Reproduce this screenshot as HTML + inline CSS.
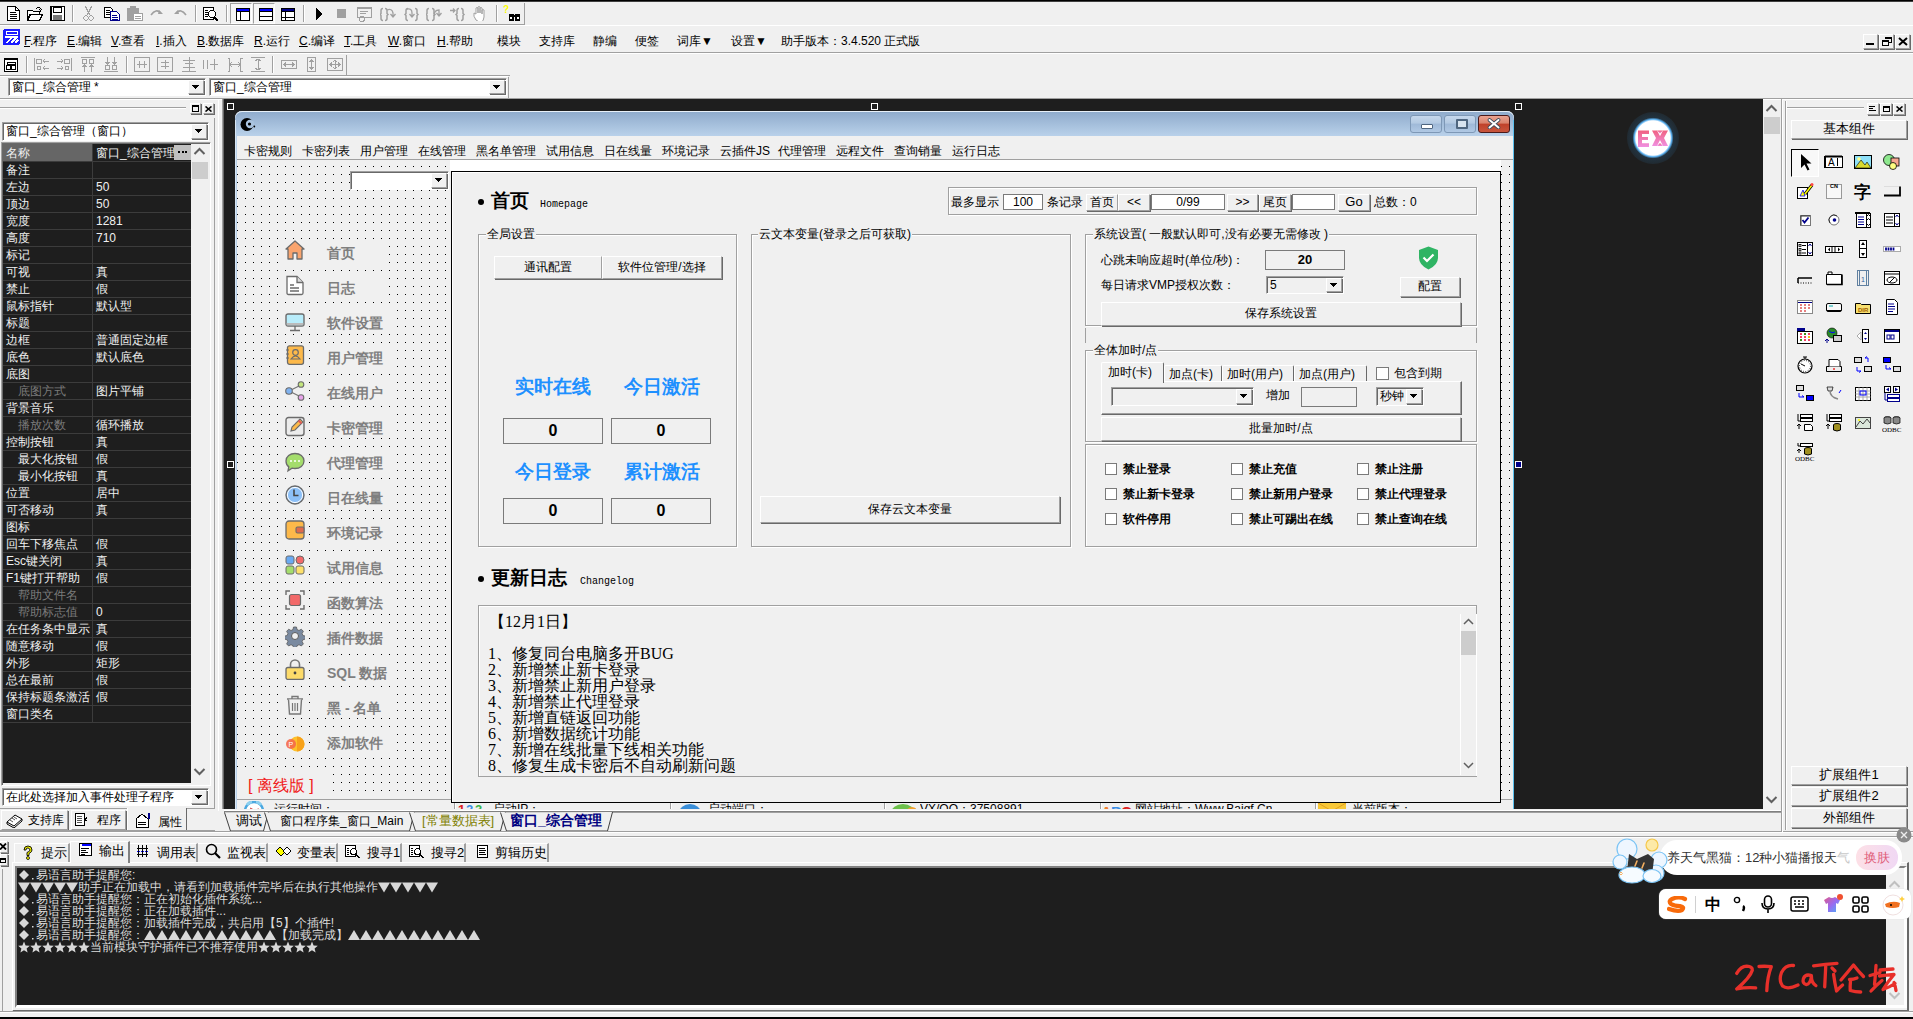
<!DOCTYPE html><html><head><meta charset="utf-8"><style>
*{margin:0;padding:0}
html,body{width:1913px;height:1019px;overflow:hidden;background:#f0f0f0}
body{position:relative;font-family:"Liberation Sans",sans-serif}
.a{position:absolute}
.t{font-family:"Liberation Sans",sans-serif;font-size:12px;line-height:14px;white-space:nowrap;color:#000}
</style></head><body><div class="a" style="left:0px;top:0px;width:1913px;height:1px;background:#000"></div>
<div class="a" style="left:0px;top:1px;width:1913px;height:1px;background:#404040"></div>
<svg class="a" style="left:7px;top:6px;" width="13" height="15" viewBox="0 0 13 15" shape-rendering="crispEdges"><path d="M0.5 0.5h8l4 4v10h-12z" fill="#fff" stroke="#000"/><path d="M8.5 0.5v4h4" fill="none" stroke="#000"/><path d="M3 6h6M3 8h7M3 10h7M3 12h7" stroke="#000"/></svg>
<svg class="a" style="left:27px;top:6px;" width="16" height="15" viewBox="0 0 16 15" shape-rendering="crispEdges"><path d="M0.5 4.5h5l1 1h6v3h-10l-2 5.5z" fill="#fff" stroke="#000"/><path d="M0.5 14.5l3-6h12l-3 6z" fill="#fff" stroke="#000"/><path d="M9 3q3-3 5 0h1l-1.5 2-1.5-2h1" fill="none" stroke="#000"/></svg>
<svg class="a" style="left:50px;top:6px;" width="15" height="15" viewBox="0 0 15 15" shape-rendering="crispEdges"><rect x="0.5" y="0.5" width="14" height="14" fill="#fff" stroke="#000"/><rect x="3" y="1" width="8" height="5" fill="#fff" stroke="#000"/><rect x="3" y="9" width="9" height="5" fill="#777"/><rect x="0" y="0" width="2" height="15" fill="#000"/></svg>
<div class="a" style="left:72px;top:5px;width:1px;height:17px;background:#a0a0a0"></div>
<div class="a" style="left:73px;top:5px;width:1px;height:17px;background:#fff"></div>
<svg class="a" style="left:83px;top:6px;" width="11" height="15" viewBox="0 0 11 15" shape-rendering="crispEdges"><path d="M2 0l5 9M9 0l-5 9" stroke="#a0a0a0" stroke-width="1.2" fill="none"/><circle cx="3" cy="12" r="2.3" fill="none" stroke="#a0a0a0"/><circle cx="8" cy="12" r="2.3" fill="none" stroke="#a0a0a0"/></svg>
<svg class="a" style="left:104px;top:7px;" width="16" height="14" viewBox="0 0 16 14" shape-rendering="crispEdges"><path d="M0.5 0.5h6l2 2v8h-8z" fill="#fff" stroke="#000"/><path d="M2 3h4M2 5h5M2 7h5" stroke="#000"/><path d="M6.5 4.5h6l3 3v6h-9z" fill="#fff" stroke="#00008b"/><path d="M8 8h5M8 10h6M8 12h6" stroke="#00008b"/></svg>
<svg class="a" style="left:127px;top:6px;" width="16" height="15" viewBox="0 0 16 15" shape-rendering="crispEdges"><rect x="0.5" y="2.5" width="11" height="12" rx="1" fill="#a0a0a0" stroke="#a0a0a0"/><rect x="3" y="0" width="6" height="3" fill="#a0a0a0"/><rect x="6.5" y="7.5" width="9" height="7" fill="#fff" stroke="#a0a0a0"/><path d="M8 10h6M8 12h6" stroke="#a0a0a0"/></svg>
<svg class="a" style="left:150px;top:9px;" width="14" height="9" viewBox="0 0 14 9"><path d="M1 6q5-7 10-2" fill="none" stroke="#a0a0a0" stroke-width="1.6"/><path d="M9 1l4 4h-5z" fill="#a0a0a0"/></svg>
<svg class="a" style="left:173px;top:9px;" width="14" height="9" viewBox="0 0 14 9"><path d="M13 6q-5-7-10-2" fill="none" stroke="#a0a0a0" stroke-width="1.6"/><path d="M5 1l-4 4h5z" fill="#a0a0a0"/></svg>
<div class="a" style="left:195px;top:5px;width:1px;height:17px;background:#a0a0a0"></div>
<div class="a" style="left:196px;top:5px;width:1px;height:17px;background:#fff"></div>
<svg class="a" style="left:203px;top:7px;" width="17" height="15" viewBox="0 0 17 15" shape-rendering="crispEdges"><rect x="0.5" y="0.5" width="10" height="12" fill="#fff" stroke="#000"/><path d="M2 3h3M2 5h3M2 7h3M2 9h3" stroke="#000"/><circle cx="9" cy="7" r="3.5" fill="#fff" stroke="#000"/><path d="M11 10l4 4" stroke="#000" stroke-width="2"/></svg>
<div class="a" style="left:226px;top:5px;width:1px;height:17px;background:#a0a0a0"></div>
<div class="a" style="left:227px;top:5px;width:1px;height:17px;background:#fff"></div>
<div class="a" style="left:230px;top:3px;width:22px;height:21px;border-top:1px solid #a0a0a0;border-left:1px solid #a0a0a0;border-right:1px solid #fff;border-bottom:1px solid #fff;box-sizing:border-box;background:#f5f5f5"></div>
<div class="a" style="left:253px;top:3px;width:22px;height:21px;border-top:1px solid #a0a0a0;border-left:1px solid #a0a0a0;border-right:1px solid #fff;border-bottom:1px solid #fff;box-sizing:border-box;background:#f5f5f5"></div>
<svg class="a" style="left:236px;top:8px;" width="14" height="13" viewBox="0 0 14 13" shape-rendering="crispEdges"><rect x="0.5" y="0.5" width="13" height="12" fill="#fff" stroke="#000"/><rect x="1" y="1" width="12" height="2" fill="#00f"/><path d="M1 3.5h12M4.5 4v8" stroke="#000"/></svg>
<svg class="a" style="left:259px;top:8px;" width="14" height="13" viewBox="0 0 14 13" shape-rendering="crispEdges"><rect x="0.5" y="0.5" width="13" height="12" fill="#fff" stroke="#000"/><rect x="1" y="1" width="12" height="2" fill="#00f"/><path d="M1 3.5h12M1 8.5h12" stroke="#000"/></svg>
<svg class="a" style="left:281px;top:8px;" width="14" height="13" viewBox="0 0 14 13" shape-rendering="crispEdges"><rect x="0.5" y="0.5" width="13" height="12" fill="#fff" stroke="#000"/><rect x="1" y="1" width="12" height="2" fill="#00008b"/><path d="M1 3.5h12M4.5 4v8M1 9.5h12" stroke="#000"/></svg>
<div class="a" style="left:303px;top:5px;width:1px;height:17px;background:#a0a0a0"></div>
<div class="a" style="left:304px;top:5px;width:1px;height:17px;background:#fff"></div>
<svg class="a" style="left:316px;top:8px;" width="7" height="12" viewBox="0 0 7 12" shape-rendering="crispEdges"><path d="M0 0l7 6l-7 6z" fill="#000"/></svg>
<svg class="a" style="left:337px;top:9px;" width="9" height="9" viewBox="0 0 9 9" shape-rendering="crispEdges"><rect width="9" height="9" fill="#a0a0a0"/></svg>
<svg class="a" style="left:357px;top:7px;" width="15" height="15" viewBox="0 0 15 15" shape-rendering="crispEdges"><rect x="0.5" y="0.5" width="14" height="10" fill="none" stroke="#a0a0a0"/><rect x="0" y="0" width="15" height="2" fill="#a0a0a0"/><path d="M3 4h8M3 6h6" stroke="#a0a0a0"/><circle cx="5" cy="12" r="2.5" fill="none" stroke="#a0a0a0"/></svg>
<svg class="a" style="left:380px;top:7px;" width="16" height="15" viewBox="0 0 16 15"><path d="M3 1.5q-2 0-2 2v3l-1 1 1 1v3q0 2 2 2" fill="none" stroke="#a0a0a0" stroke-width="1.5"/><path d="M5 1.5q2 0 2 2v3l1 1-1 1v3q0 2-2 2" fill="none" stroke="#a0a0a0" stroke-width="1.5"/><path d="M7 3q5-2 6 3v3M10.5 7l2.5 3 2.5-3" fill="none" stroke="#a0a0a0" stroke-width="1.3"/></svg>
<svg class="a" style="left:404px;top:7px;" width="16" height="15" viewBox="0 0 16 15"><path d="M4 1.5q-2 0-2 2v3l-1 1 1 1v3q0 2 2 2" fill="none" stroke="#a0a0a0" stroke-width="1.5"/><path d="M11 1.5q2 0 2 2v3l1 1-1 1v3q0 2-2 2" fill="none" stroke="#a0a0a0" stroke-width="1.5"/><path d="M3 2q5-1 5 4v3M5.5 7l2.5 3 2.5-3" fill="none" stroke="#a0a0a0" stroke-width="1.3"/></svg>
<svg class="a" style="left:426px;top:7px;" width="16" height="15" viewBox="0 0 16 15"><path d="M3 1.5q-2 0-2 2v3l-1 1 1 1v3q0 2 2 2" fill="none" stroke="#a0a0a0" stroke-width="1.5"/><path d="M6 1.5q2 0 2 2v3l1 1-1 1v3q0 2-2 2" fill="none" stroke="#a0a0a0" stroke-width="1.5"/><path d="M8 9q0-6 5-6v5M10.5 6l2.5 3 2.5-3" fill="none" stroke="#a0a0a0" stroke-width="1.3"/></svg>
<svg class="a" style="left:450px;top:7px;" width="16" height="15" viewBox="0 0 16 15"><path d="M9 1.5q-2 0-2 2v3l-1 1 1 1v3q0 2 2 2" fill="none" stroke="#a0a0a0" stroke-width="1.5"/><path d="M11 1.5q2 0 2 2v3l1 1-1 1v3q0 2-2 2" fill="none" stroke="#a0a0a0" stroke-width="1.5"/><path d="M0 3.5h5M3 1.5l2 2-2 2" fill="none" stroke="#a0a0a0" stroke-width="1.3"/></svg>
<svg class="a" style="left:473px;top:6px;" width="13" height="15" viewBox="0 0 13 15"><path d="M3 14q-3-4-2-7l2 1v-6q1-1 2 0v5v-6q1-1 2 0v6v-5q1-1 2 0v6v-4q1-1 2 0v7q0 3-3 6z" fill="#fff" stroke="#a0a0a0"/></svg>
<div class="a" style="left:496px;top:5px;width:1px;height:17px;background:#a0a0a0"></div>
<div class="a" style="left:497px;top:5px;width:1px;height:17px;background:#fff"></div>
<svg class="a" style="left:502px;top:4px;" width="19" height="18" viewBox="0 0 19 18"><text x="1" y="9" font-family="Liberation Sans" font-size="10" font-weight="bold" fill="#ff0">?</text><rect x="7" y="10" width="5" height="7" fill="#000"/><rect x="13" y="10" width="5" height="7" fill="#000"/><rect x="10" y="11" width="4" height="2" fill="#000"/><rect x="8" y="13" width="2" height="2" fill="#fff"/><rect x="15" y="13" width="2" height="2" fill="#fff"/></svg>
<div class="a" style="left:524px;top:3px;width:1px;height:21px;background:#a0a0a0"></div>
<div class="a" style="left:0px;top:24px;width:525px;height:1px;background:#a0a0a0"></div>
<div class="a" style="left:0px;top:25px;width:1913px;height:1px;background:#fff"></div>
<svg class="a" style="left:3px;top:29px;" width="17" height="16" viewBox="0 0 17 16" shape-rendering="crispEdges"><rect x="0" y="0" width="17" height="16" rx="2" fill="#1a1aff"/><rect x="3" y="2" width="11" height="3" fill="none" stroke="#fff"/><path d="M2 8h13M4 14l4-5M8 14l5-5M12 14l3-3" stroke="#fff" stroke-width="1.5"/></svg>
<div class="a t" style="left:24px;top:34px;"><u>F</u>.程序</div>
<div class="a t" style="left:67px;top:34px;"><u>E</u>.编辑</div>
<div class="a t" style="left:111px;top:34px;"><u>V</u>.查看</div>
<div class="a t" style="left:156px;top:34px;"><u>I</u>.插入</div>
<div class="a t" style="left:197px;top:34px;"><u>B</u>.数据库</div>
<div class="a t" style="left:254px;top:34px;"><u>R</u>.运行</div>
<div class="a t" style="left:299px;top:34px;"><u>C</u>.编译</div>
<div class="a t" style="left:344px;top:34px;"><u>T</u>.工具</div>
<div class="a t" style="left:388px;top:34px;"><u>W</u>.窗口</div>
<div class="a t" style="left:437px;top:34px;"><u>H</u>.帮助</div>
<div class="a t" style="left:497px;top:34px;">模块</div>
<div class="a t" style="left:539px;top:34px;">支持库</div>
<div class="a t" style="left:593px;top:34px;">静编</div>
<div class="a t" style="left:635px;top:34px;">便签</div>
<div class="a t" style="left:677px;top:34px;">词库▼</div>
<div class="a t" style="left:731px;top:34px;">设置▼</div>
<div class="a t" style="left:781px;top:34px;">助手版本：3.4.520 正式版</div>
<div class="a" style="left:1863px;top:34px;width:15px;height:15px;background:#f0f0f0;border-top:1px solid #fff;border-left:1px solid #fff;border-right:1px solid #a0a0a0;border-bottom:1px solid #a0a0a0;box-shadow:1px 1px 0 #696969;box-sizing:border-box;"></div>
<div class="a" style="left:1879px;top:34px;width:15px;height:15px;background:#f0f0f0;border-top:1px solid #fff;border-left:1px solid #fff;border-right:1px solid #a0a0a0;border-bottom:1px solid #a0a0a0;box-shadow:1px 1px 0 #696969;box-sizing:border-box;"></div>
<div class="a" style="left:1895px;top:34px;width:15px;height:15px;background:#f0f0f0;border-top:1px solid #fff;border-left:1px solid #fff;border-right:1px solid #a0a0a0;border-bottom:1px solid #a0a0a0;box-shadow:1px 1px 0 #696969;box-sizing:border-box;"></div>
<svg class="a" style="left:1866px;top:43px;" width="8" height="2" viewBox="0 0 8 2" shape-rendering="crispEdges"><rect width="8" height="2" fill="#000"/></svg>
<svg class="a" style="left:1882px;top:37px;" width="10" height="9" viewBox="0 0 10 9" shape-rendering="crispEdges"><path d="M3 0.5h6v5h-2M0.5 3.5h6v5h-6z" fill="none" stroke="#000"/><rect x="3" y="0" width="7" height="2" fill="#000"/><rect x="0" y="3" width="7" height="2" fill="#000"/></svg>
<svg class="a" style="left:1898px;top:37px;" width="10" height="9" viewBox="0 0 10 9"><path d="M1 1l8 7M9 1l-8 7" stroke="#000" stroke-width="2"/></svg>
<div class="a" style="left:0px;top:52px;width:1913px;height:1px;background:#a0a0a0"></div>
<div class="a" style="left:0px;top:53px;width:1913px;height:1px;background:#fff"></div>
<svg class="a" style="left:4px;top:58px;" width="14" height="14" viewBox="0 0 14 14" shape-rendering="crispEdges"><rect x="0.5" y="0.5" width="13" height="13" fill="#fff" stroke="#000"/><rect x="0" y="0" width="14" height="2" fill="#000"/><rect x="3" y="4" width="8" height="2" fill="none" stroke="#000"/><rect x="2.5" y="7.5" width="4" height="4" fill="none" stroke="#000"/><rect x="7.5" y="7.5" width="4" height="4" fill="none" stroke="#000"/></svg>
<div class="a" style="left:26px;top:56px;width:1px;height:17px;background:#a0a0a0"></div>
<div class="a" style="left:27px;top:56px;width:1px;height:17px;background:#fff"></div>
<svg class="a" style="left:34px;top:57px;" width="16" height="15" viewBox="0 0 16 15" shape-rendering="crispEdges"><path d="M0.5 1v13" stroke="#a0a0a0"/><rect x="2.5" y="2.5" width="5" height="4" fill="none" stroke="#a0a0a0"/><circle cx="5" cy="11" r="2" fill="none" stroke="#a0a0a0"/><path d="M9 4h6M9 11h6M11 2l-2 2 2 2M11 9l-2 2 2 2" fill="none" stroke="#a0a0a0"/></svg>
<svg class="a" style="left:57px;top:57px;" width="16" height="15" viewBox="0 0 16 15" shape-rendering="crispEdges"><path d="M14.5 1v13" stroke="#a0a0a0"/><rect x="7.5" y="2.5" width="5" height="4" fill="none" stroke="#a0a0a0"/><circle cx="10" cy="11" r="2" fill="none" stroke="#a0a0a0"/><path d="M0 4h6M0 11h6M4 2l2 2-2 2M4 9l2 2-2 2" fill="none" stroke="#a0a0a0"/></svg>
<svg class="a" style="left:80px;top:57px;" width="16" height="15" viewBox="0 0 16 15" shape-rendering="crispEdges"><path d="M1 0.5h14" stroke="#a0a0a0"/><rect x="2.5" y="2.5" width="4" height="4" fill="none" stroke="#a0a0a0"/><rect x="9.5" y="2.5" width="4" height="4" fill="none" stroke="#a0a0a0"/><path d="M4.5 8v7M11.5 8v7M2.5 10l2-2 2 2M9.5 10l2-2 2 2" fill="none" stroke="#a0a0a0"/></svg>
<svg class="a" style="left:103px;top:57px;" width="16" height="15" viewBox="0 0 16 15" shape-rendering="crispEdges"><path d="M1 14.5h14" stroke="#a0a0a0"/><rect x="2.5" y="8.5" width="4" height="4" fill="none" stroke="#a0a0a0"/><rect x="9.5" y="8.5" width="4" height="4" fill="none" stroke="#a0a0a0"/><path d="M4.5 0v7M11.5 0v7M2.5 5l2 2 2-2M9.5 5l2 2 2-2" fill="none" stroke="#a0a0a0"/></svg>
<div class="a" style="left:126px;top:56px;width:1px;height:17px;background:#a0a0a0"></div>
<div class="a" style="left:127px;top:56px;width:1px;height:17px;background:#fff"></div>
<svg class="a" style="left:134px;top:57px;" width="16" height="15" viewBox="0 0 16 15" shape-rendering="crispEdges"><rect x="0.5" y="0.5" width="15" height="14" fill="none" stroke="#a0a0a0"/><path d="M3 7.5h10M5.5 4v7M10.5 4v7" stroke="#a0a0a0"/></svg>
<svg class="a" style="left:157px;top:57px;" width="16" height="15" viewBox="0 0 16 15" shape-rendering="crispEdges"><rect x="0.5" y="0.5" width="15" height="14" fill="none" stroke="#a0a0a0"/><path d="M8 3v9M4 5.5h8M4 9.5h8" stroke="#a0a0a0"/></svg>
<svg class="a" style="left:181px;top:57px;" width="16" height="15" viewBox="0 0 16 15" shape-rendering="crispEdges"><path d="M8 0v15M2 3.5h12M4 6.5h8M2 10.5h12M1 14.5h14" stroke="#a0a0a0"/></svg>
<svg class="a" style="left:203px;top:57px;" width="16" height="15" viewBox="0 0 16 15" shape-rendering="crispEdges"><path d="M0.5 3v9M4.5 3v9M7 7.5h8M11 2v11" stroke="#a0a0a0"/></svg>
<svg class="a" style="left:227px;top:57px;" width="16" height="15" viewBox="0 0 16 15" shape-rendering="crispEdges"><path d="M0.5 1h2v13h-2M15.5 1h-2v13h2M4 7.5h8M5 5l-2 2.5 2 2.5M11 5l2 2.5-2 2.5" fill="none" stroke="#a0a0a0"/></svg>
<svg class="a" style="left:250px;top:57px;" width="16" height="15" viewBox="0 0 16 15" shape-rendering="crispEdges"><path d="M1 0.5h14M1 14.5h14M8 2v11M5 4l3-2 3 2M5 11l3 2 3-2" fill="none" stroke="#a0a0a0"/></svg>
<div class="a" style="left:272px;top:56px;width:1px;height:17px;background:#a0a0a0"></div>
<div class="a" style="left:273px;top:56px;width:1px;height:17px;background:#fff"></div>
<svg class="a" style="left:281px;top:57px;" width="16" height="15" viewBox="0 0 16 15" shape-rendering="crispEdges"><rect x="0.5" y="3.5" width="15" height="8" fill="none" stroke="#a0a0a0"/><path d="M3 7.5h10M5 5.5l-2 2 2 2M11 5.5l2 2-2 2" fill="none" stroke="#a0a0a0"/></svg>
<svg class="a" style="left:304px;top:57px;" width="16" height="15" viewBox="0 0 16 15" shape-rendering="crispEdges"><rect x="3.5" y="0.5" width="8" height="14" fill="none" stroke="#a0a0a0"/><path d="M7.5 3v9M5.5 5l2-2 2 2M5.5 10l2 2 2-2" fill="none" stroke="#a0a0a0"/></svg>
<svg class="a" style="left:327px;top:57px;" width="16" height="15" viewBox="0 0 16 15" shape-rendering="crispEdges"><rect x="0.5" y="1.5" width="15" height="12" fill="none" stroke="#a0a0a0"/><path d="M8 3v9M3 7.5h10M6 5l2-2 2 2M6 10l2 2 2-2M5 5.5l-2 2 2 2M11 5.5l2 2-2 2" fill="none" stroke="#a0a0a0"/></svg>
<div class="a" style="left:346px;top:55px;width:1px;height:20px;background:#a0a0a0"></div>
<div class="a" style="left:0px;top:75px;width:510px;height:1px;background:#a0a0a0"></div>
<div class="a" style="left:0px;top:76px;width:508px;height:1px;background:#fff"></div>
<div class="a" style="left:8px;top:78px;width:198px;height:18px;background:#fff;border-top:1px solid #a0a0a0;border-left:1px solid #a0a0a0;border-right:1px solid #fff;border-bottom:1px solid #fff;box-shadow:inset 1px 1px 0 #696969;box-sizing:border-box;"></div>
<div class="a t" style="left:12px;top:80px;">窗口_综合管理 *</div>
<div class="a" style="left:188px;top:80px;width:16px;height:14px;background:#f0f0f0;border-top:1px solid #fff;border-left:1px solid #fff;border-right:1px solid #a0a0a0;border-bottom:1px solid #a0a0a0;box-shadow:1px 1px 0 #696969;box-sizing:border-box;"><svg class="a" style="left:3px;top:4px" width="7" height="4" viewBox="0 0 7 4" shape-rendering="crispEdges"><path d="M0 0h7v1h-1v1h-1v1h-1v1h-1v-1h-1v-1h-1v-1h-1z" fill="#000"/></svg></div>
<div class="a" style="left:209px;top:78px;width:298px;height:18px;background:#fff;border-top:1px solid #a0a0a0;border-left:1px solid #a0a0a0;border-right:1px solid #fff;border-bottom:1px solid #fff;box-shadow:inset 1px 1px 0 #696969;box-sizing:border-box;"></div>
<div class="a t" style="left:213px;top:80px;">窗口_综合管理</div>
<div class="a" style="left:489px;top:80px;width:16px;height:14px;background:#f0f0f0;border-top:1px solid #fff;border-left:1px solid #fff;border-right:1px solid #a0a0a0;border-bottom:1px solid #a0a0a0;box-shadow:1px 1px 0 #696969;box-sizing:border-box;"><svg class="a" style="left:3px;top:4px" width="7" height="4" viewBox="0 0 7 4" shape-rendering="crispEdges"><path d="M0 0h7v1h-1v1h-1v1h-1v1h-1v-1h-1v-1h-1v-1h-1z" fill="#000"/></svg></div>
<div class="a" style="left:508px;top:77px;width:1px;height:21px;background:#a0a0a0"></div>
<div class="a" style="left:0px;top:98px;width:1913px;height:1px;background:#a0a0a0"></div>
<div class="a" style="left:0px;top:99px;width:1913px;height:1px;background:#fff"></div>
<div class="a" style="left:0px;top:107px;width:186px;height:1px;background:#a0a0a0"></div>
<div class="a" style="left:0px;top:108px;width:186px;height:1px;background:#fff"></div>
<div class="a" style="left:190px;top:103px;width:11px;height:11px;background:#f0f0f0;border-top:1px solid #fff;border-left:1px solid #fff;border-right:1px solid #a0a0a0;border-bottom:1px solid #a0a0a0;box-shadow:1px 1px 0 #696969;box-sizing:border-box;"></div>
<svg class="a" style="left:192px;top:105px;" width="7" height="7" viewBox="0 0 7 7" shape-rendering="crispEdges"><rect x="0.5" y="0.5" width="6" height="6" fill="none" stroke="#000"/><rect x="0" y="0" width="7" height="2" fill="#000"/></svg>
<div class="a" style="left:203px;top:103px;width:11px;height:11px;background:#f0f0f0;border-top:1px solid #fff;border-left:1px solid #fff;border-right:1px solid #a0a0a0;border-bottom:1px solid #a0a0a0;box-shadow:1px 1px 0 #696969;box-sizing:border-box;"></div>
<svg class="a" style="left:205px;top:106px;" width="7" height="6" viewBox="0 0 7 6"><path d="M0.5 0.5l6 5M6.5 0.5l-6 5" stroke="#000" stroke-width="1.6"/></svg>
<div class="a" style="left:214px;top:118px;width:1px;height:691px;background:#a0a0a0"></div>
<div class="a" style="left:0px;top:808px;width:215px;height:1px;background:#a0a0a0"></div>
<div class="a" style="left:218px;top:99px;width:1px;height:712px;background:#fff"></div>
<div class="a" style="left:222px;top:99px;width:1px;height:710px;background:#a0a0a0"></div>
<div class="a" style="left:223px;top:99px;width:1px;height:710px;background:#696969"></div>
<div class="a" style="left:2px;top:122px;width:207px;height:19px;background:#fff;border-top:1px solid #a0a0a0;border-left:1px solid #a0a0a0;border-right:1px solid #fff;border-bottom:1px solid #fff;box-shadow:inset 1px 1px 0 #696969;box-sizing:border-box;"></div>
<div class="a t" style="left:6px;top:124px;">窗口_综合管理（窗口）</div>
<div class="a" style="left:191px;top:124px;width:16px;height:15px;background:#f0f0f0;border-top:1px solid #fff;border-left:1px solid #fff;border-right:1px solid #a0a0a0;border-bottom:1px solid #a0a0a0;box-shadow:1px 1px 0 #696969;box-sizing:border-box;"><svg class="a" style="left:3px;top:4px" width="7" height="4" viewBox="0 0 7 4" shape-rendering="crispEdges"><path d="M0 0h7v1h-1v1h-1v1h-1v1h-1v-1h-1v-1h-1v-1h-1z" fill="#000"/></svg></div>
<div class="a" style="left:1px;top:142px;width:210px;height:644px;border-top:1px solid #a0a0a0;border-left:1px solid #a0a0a0;border-right:1px solid #fff;border-bottom:1px solid #fff;box-shadow:inset 1px 1px 0 #696969;box-sizing:border-box;background:#f0f0f0"></div>
<div class="a" style="left:3px;top:144px;width:188px;height:639px;background:#1e1e1e"></div>
<div class="a" style="left:3px;top:144px;width:89px;height:17px;background:#666"></div>
<div class="a" style="left:3px;top:161px;width:188px;height:1px;background:#3c3c3c"></div>
<div class="a t" style="left:6px;top:145px;color:#f0f0f0;font-size:12px;line-height:16px">名称</div>
<div class="a t" style="left:96px;top:145px;color:#f0f0f0;font-size:12px;line-height:16px">窗口_综合管理</div>
<div class="a" style="left:3px;top:178px;width:188px;height:1px;background:#3c3c3c"></div>
<div class="a t" style="left:6px;top:162px;color:#f0f0f0;font-size:12px;line-height:16px">备注</div>
<div class="a" style="left:3px;top:195px;width:188px;height:1px;background:#3c3c3c"></div>
<div class="a t" style="left:6px;top:179px;color:#f0f0f0;font-size:12px;line-height:16px">左边</div>
<div class="a t" style="left:96px;top:179px;color:#f0f0f0;font-size:12px;line-height:16px">50</div>
<div class="a" style="left:3px;top:212px;width:188px;height:1px;background:#3c3c3c"></div>
<div class="a t" style="left:6px;top:196px;color:#f0f0f0;font-size:12px;line-height:16px">顶边</div>
<div class="a t" style="left:96px;top:196px;color:#f0f0f0;font-size:12px;line-height:16px">50</div>
<div class="a" style="left:3px;top:229px;width:188px;height:1px;background:#3c3c3c"></div>
<div class="a t" style="left:6px;top:213px;color:#f0f0f0;font-size:12px;line-height:16px">宽度</div>
<div class="a t" style="left:96px;top:213px;color:#f0f0f0;font-size:12px;line-height:16px">1281</div>
<div class="a" style="left:3px;top:246px;width:188px;height:1px;background:#3c3c3c"></div>
<div class="a t" style="left:6px;top:230px;color:#f0f0f0;font-size:12px;line-height:16px">高度</div>
<div class="a t" style="left:96px;top:230px;color:#f0f0f0;font-size:12px;line-height:16px">710</div>
<div class="a" style="left:3px;top:263px;width:188px;height:1px;background:#3c3c3c"></div>
<div class="a t" style="left:6px;top:247px;color:#f0f0f0;font-size:12px;line-height:16px">标记</div>
<div class="a" style="left:3px;top:280px;width:188px;height:1px;background:#3c3c3c"></div>
<div class="a t" style="left:6px;top:264px;color:#f0f0f0;font-size:12px;line-height:16px">可视</div>
<div class="a t" style="left:96px;top:264px;color:#f0f0f0;font-size:12px;line-height:16px">真</div>
<div class="a" style="left:3px;top:297px;width:188px;height:1px;background:#3c3c3c"></div>
<div class="a t" style="left:6px;top:281px;color:#f0f0f0;font-size:12px;line-height:16px">禁止</div>
<div class="a t" style="left:96px;top:281px;color:#f0f0f0;font-size:12px;line-height:16px">假</div>
<div class="a" style="left:3px;top:314px;width:188px;height:1px;background:#3c3c3c"></div>
<div class="a t" style="left:6px;top:298px;color:#f0f0f0;font-size:12px;line-height:16px">鼠标指针</div>
<div class="a t" style="left:96px;top:298px;color:#f0f0f0;font-size:12px;line-height:16px">默认型</div>
<div class="a" style="left:3px;top:331px;width:188px;height:1px;background:#3c3c3c"></div>
<div class="a t" style="left:6px;top:315px;color:#f0f0f0;font-size:12px;line-height:16px">标题</div>
<div class="a" style="left:3px;top:348px;width:188px;height:1px;background:#3c3c3c"></div>
<div class="a t" style="left:6px;top:332px;color:#f0f0f0;font-size:12px;line-height:16px">边框</div>
<div class="a t" style="left:96px;top:332px;color:#f0f0f0;font-size:12px;line-height:16px">普通固定边框</div>
<div class="a" style="left:3px;top:365px;width:188px;height:1px;background:#3c3c3c"></div>
<div class="a t" style="left:6px;top:349px;color:#f0f0f0;font-size:12px;line-height:16px">底色</div>
<div class="a t" style="left:96px;top:349px;color:#f0f0f0;font-size:12px;line-height:16px">默认底色</div>
<div class="a" style="left:3px;top:382px;width:188px;height:1px;background:#3c3c3c"></div>
<div class="a t" style="left:6px;top:366px;color:#f0f0f0;font-size:12px;line-height:16px">底图</div>
<div class="a" style="left:3px;top:399px;width:188px;height:1px;background:#3c3c3c"></div>
<div class="a t" style="left:18px;top:383px;color:#7a7a7a;font-size:12px;line-height:16px">底图方式</div>
<div class="a t" style="left:96px;top:383px;color:#f0f0f0;font-size:12px;line-height:16px">图片平铺</div>
<div class="a" style="left:3px;top:416px;width:188px;height:1px;background:#3c3c3c"></div>
<div class="a t" style="left:6px;top:400px;color:#f0f0f0;font-size:12px;line-height:16px">背景音乐</div>
<div class="a" style="left:3px;top:433px;width:188px;height:1px;background:#3c3c3c"></div>
<div class="a t" style="left:18px;top:417px;color:#7a7a7a;font-size:12px;line-height:16px">播放次数</div>
<div class="a t" style="left:96px;top:417px;color:#f0f0f0;font-size:12px;line-height:16px">循环播放</div>
<div class="a" style="left:3px;top:450px;width:188px;height:1px;background:#3c3c3c"></div>
<div class="a t" style="left:6px;top:434px;color:#f0f0f0;font-size:12px;line-height:16px">控制按钮</div>
<div class="a t" style="left:96px;top:434px;color:#f0f0f0;font-size:12px;line-height:16px">真</div>
<div class="a" style="left:3px;top:467px;width:188px;height:1px;background:#3c3c3c"></div>
<div class="a t" style="left:18px;top:451px;color:#f0f0f0;font-size:12px;line-height:16px">最大化按钮</div>
<div class="a t" style="left:96px;top:451px;color:#f0f0f0;font-size:12px;line-height:16px">假</div>
<div class="a" style="left:3px;top:484px;width:188px;height:1px;background:#3c3c3c"></div>
<div class="a t" style="left:18px;top:468px;color:#f0f0f0;font-size:12px;line-height:16px">最小化按钮</div>
<div class="a t" style="left:96px;top:468px;color:#f0f0f0;font-size:12px;line-height:16px">真</div>
<div class="a" style="left:3px;top:501px;width:188px;height:1px;background:#3c3c3c"></div>
<div class="a t" style="left:6px;top:485px;color:#f0f0f0;font-size:12px;line-height:16px">位置</div>
<div class="a t" style="left:96px;top:485px;color:#f0f0f0;font-size:12px;line-height:16px">居中</div>
<div class="a" style="left:3px;top:518px;width:188px;height:1px;background:#3c3c3c"></div>
<div class="a t" style="left:6px;top:502px;color:#f0f0f0;font-size:12px;line-height:16px">可否移动</div>
<div class="a t" style="left:96px;top:502px;color:#f0f0f0;font-size:12px;line-height:16px">真</div>
<div class="a" style="left:3px;top:535px;width:188px;height:1px;background:#3c3c3c"></div>
<div class="a t" style="left:6px;top:519px;color:#f0f0f0;font-size:12px;line-height:16px">图标</div>
<div class="a" style="left:3px;top:552px;width:188px;height:1px;background:#3c3c3c"></div>
<div class="a t" style="left:6px;top:536px;color:#f0f0f0;font-size:12px;line-height:16px">回车下移焦点</div>
<div class="a t" style="left:96px;top:536px;color:#f0f0f0;font-size:12px;line-height:16px">假</div>
<div class="a" style="left:3px;top:569px;width:188px;height:1px;background:#3c3c3c"></div>
<div class="a t" style="left:6px;top:553px;color:#f0f0f0;font-size:12px;line-height:16px">Esc键关闭</div>
<div class="a t" style="left:96px;top:553px;color:#f0f0f0;font-size:12px;line-height:16px">真</div>
<div class="a" style="left:3px;top:586px;width:188px;height:1px;background:#3c3c3c"></div>
<div class="a t" style="left:6px;top:570px;color:#f0f0f0;font-size:12px;line-height:16px">F1键打开帮助</div>
<div class="a t" style="left:96px;top:570px;color:#f0f0f0;font-size:12px;line-height:16px">假</div>
<div class="a" style="left:3px;top:603px;width:188px;height:1px;background:#3c3c3c"></div>
<div class="a t" style="left:18px;top:587px;color:#7a7a7a;font-size:12px;line-height:16px">帮助文件名</div>
<div class="a" style="left:3px;top:620px;width:188px;height:1px;background:#3c3c3c"></div>
<div class="a t" style="left:18px;top:604px;color:#7a7a7a;font-size:12px;line-height:16px">帮助标志值</div>
<div class="a t" style="left:96px;top:604px;color:#f0f0f0;font-size:12px;line-height:16px">0</div>
<div class="a" style="left:3px;top:637px;width:188px;height:1px;background:#3c3c3c"></div>
<div class="a t" style="left:6px;top:621px;color:#f0f0f0;font-size:12px;line-height:16px">在任务条中显示</div>
<div class="a t" style="left:96px;top:621px;color:#f0f0f0;font-size:12px;line-height:16px">真</div>
<div class="a" style="left:3px;top:654px;width:188px;height:1px;background:#3c3c3c"></div>
<div class="a t" style="left:6px;top:638px;color:#f0f0f0;font-size:12px;line-height:16px">随意移动</div>
<div class="a t" style="left:96px;top:638px;color:#f0f0f0;font-size:12px;line-height:16px">假</div>
<div class="a" style="left:3px;top:671px;width:188px;height:1px;background:#3c3c3c"></div>
<div class="a t" style="left:6px;top:655px;color:#f0f0f0;font-size:12px;line-height:16px">外形</div>
<div class="a t" style="left:96px;top:655px;color:#f0f0f0;font-size:12px;line-height:16px">矩形</div>
<div class="a" style="left:3px;top:688px;width:188px;height:1px;background:#3c3c3c"></div>
<div class="a t" style="left:6px;top:672px;color:#f0f0f0;font-size:12px;line-height:16px">总在最前</div>
<div class="a t" style="left:96px;top:672px;color:#f0f0f0;font-size:12px;line-height:16px">假</div>
<div class="a" style="left:3px;top:705px;width:188px;height:1px;background:#3c3c3c"></div>
<div class="a t" style="left:6px;top:689px;color:#f0f0f0;font-size:12px;line-height:16px">保持标题条激活</div>
<div class="a t" style="left:96px;top:689px;color:#f0f0f0;font-size:12px;line-height:16px">假</div>
<div class="a" style="left:3px;top:722px;width:188px;height:1px;background:#3c3c3c"></div>
<div class="a t" style="left:6px;top:706px;color:#f0f0f0;font-size:12px;line-height:16px">窗口类名</div>
<div class="a" style="left:92px;top:144px;width:1px;height:578px;background:#3c3c3c"></div>
<div class="a" style="left:174px;top:145px;width:17px;height:15px;background:#c0c0c0"></div>
<svg class="a" style="left:178px;top:151px;" width="9" height="2" viewBox="0 0 9 2" shape-rendering="crispEdges"><rect x="0" y="0" width="2" height="2" fill="#000"/><rect x="3.5" y="0" width="2" height="2" fill="#000"/><rect x="7" y="0" width="2" height="2" fill="#000"/></svg>
<svg class="a" style="left:193px;top:147px;" width="13" height="8" viewBox="0 0 13 8"><path d="M1.5 7l5-5 5 5" fill="none" stroke="#606060" stroke-width="2"/></svg>
<div class="a" style="left:192px;top:162px;width:16px;height:17px;background:#cdcdcd"></div>
<svg class="a" style="left:193px;top:768px;" width="13" height="8" viewBox="0 0 13 8"><path d="M1.5 1l5 5 5-5" fill="none" stroke="#606060" stroke-width="2"/></svg>
<div class="a" style="left:2px;top:788px;width:207px;height:18px;background:#fff;border-top:1px solid #a0a0a0;border-left:1px solid #a0a0a0;border-right:1px solid #fff;border-bottom:1px solid #fff;box-shadow:inset 1px 1px 0 #696969;box-sizing:border-box;"></div>
<div class="a t" style="left:6px;top:790px;">在此处选择加入事件处理子程序</div>
<div class="a" style="left:191px;top:790px;width:16px;height:14px;background:#f0f0f0;border-top:1px solid #fff;border-left:1px solid #fff;border-right:1px solid #a0a0a0;border-bottom:1px solid #a0a0a0;box-shadow:1px 1px 0 #696969;box-sizing:border-box;"><svg class="a" style="left:3px;top:4px" width="7" height="4" viewBox="0 0 7 4" shape-rendering="crispEdges"><path d="M0 0h7v1h-1v1h-1v1h-1v1h-1v-1h-1v-1h-1v-1h-1z" fill="#000"/></svg></div>
<div class="a" style="left:1px;top:810px;width:67px;height:20px;background:#f0f0f0;border-top:1px solid #fff;border-left:1px solid #fff;border-right:1px solid #a0a0a0;border-bottom:1px solid #a0a0a0;box-shadow:1px 1px 0 #696969;box-sizing:border-box;"></div>
<div class="a" style="left:71px;top:810px;width:55px;height:20px;background:#f0f0f0;border-top:1px solid #fff;border-left:1px solid #fff;border-right:1px solid #a0a0a0;border-bottom:1px solid #a0a0a0;box-shadow:1px 1px 0 #696969;box-sizing:border-box;"></div>
<div class="a" style="left:127px;top:808px;width:60px;height:23px;background:#f0f0f0;border-left:1px solid #fff;border-right:1px solid #696969;border-bottom:1px solid #696969;box-sizing:border-box"></div>
<svg class="a" style="left:6px;top:813px;" width="17" height="15" viewBox="0 0 17 15"><path d="M1 9l8-7 7 4-8 7z" fill="#fff" stroke="#000"/><path d="M1 9v2l7 4 8-7v-2" fill="none" stroke="#000"/><path d="M4 7l3 2M6 5l3 2M8 4l3 2" stroke="#555"/></svg>
<div class="a t" style="left:28px;top:813px;">支持库</div>
<svg class="a" style="left:75px;top:813px;" width="16" height="14" viewBox="0 0 16 14" shape-rendering="crispEdges"><rect x="0.5" y="0.5" width="9" height="12" fill="#fff" stroke="#000"/><path d="M2 3h5M2 5h5M2 7h5M2 9h5" stroke="#555"/><path d="M12 4l-2 3M10 5v2h2" stroke="#000" fill="none"/></svg>
<div class="a t" style="left:97px;top:813px;">程序</div>
<svg class="a" style="left:135px;top:812px;" width="16" height="16" viewBox="0 0 16 16" shape-rendering="crispEdges"><path d="M1 7l6-5 6 5v8h-12z" fill="#fff" stroke="#000"/><path d="M3 10h8M3 12h8" stroke="#000"/><rect x="13" y="1" width="2" height="6" fill="#00008b"/></svg>
<div class="a t" style="left:158px;top:815px;">属性</div>
<div class="a" style="left:0px;top:830px;width:215px;height:1px;background:#a0a0a0"></div>
<div class="a" style="left:224px;top:99px;width:1539px;height:710px;background:#1e1e1e;overflow:hidden"></div>
<div class="a" style="left:227px;top:103px;width:7px;height:7px;border:1px solid #fff;box-sizing:border-box;background:#1e1e1e"></div>
<div class="a" style="left:871px;top:103px;width:7px;height:7px;border:1px solid #fff;box-sizing:border-box;background:#1e1e1e"></div>
<div class="a" style="left:1515px;top:103px;width:7px;height:7px;border:1px solid #fff;box-sizing:border-box;background:#1e1e1e"></div>
<div class="a" style="left:227px;top:461px;width:7px;height:7px;border:1px solid #fff;box-sizing:border-box;background:#1e1e1e"></div>
<div class="a" style="left:1515px;top:461px;width:7px;height:7px;border:1px solid #fff;box-sizing:border-box;background:#00008b"></div>
<div class="a" style="left:235px;top:111px;width:1279px;height:698px;background:#f0f0f0;border-radius:7px 7px 0 0;overflow:hidden"></div>
<div class="a" style="left:235px;top:111px;width:1279px;height:25px;background:linear-gradient(#8eaacb,#b9d1ea);border-radius:7px 7px 0 0;box-shadow:inset 0 1px 0 #e8f0f8"></div>
<div class="a" style="left:235px;top:120px;width:1px;height:689px;background:#d8e6f4"></div>
<div class="a" style="left:1513px;top:120px;width:1px;height:689px;background:#5bc0ee"></div>
<div class="a" style="left:236px;top:136px;width:1px;height:673px;background:#b9d1ea"></div>
<svg class="a" style="left:240px;top:117px;" width="16" height="15" viewBox="0 0 16 15"><circle cx="7" cy="7.5" r="6.5" fill="#000"/><circle cx="10" cy="7" r="4.2" fill="#aac4e0"/><circle cx="9.5" cy="7" r="1.6" fill="#000"/><circle cx="14.3" cy="9.5" r="0.9" fill="#000"/></svg>
<div class="a" style="left:1410px;top:115px;width:32px;height:18px;border:1px solid #7e98b6;border-radius:3px;box-sizing:border-box;background:linear-gradient(#c6d8ec 0%,#b3c9e2 45%,#9fb9d8 50%,#b0c8e4 100%)"></div>
<div class="a" style="left:1421px;top:124px;width:10px;height:3px;background:#fff;border:1px solid #4f6680;box-sizing:content-box;border-radius:1px"></div>
<div class="a" style="left:1444px;top:115px;width:32px;height:18px;border:1px solid #7e98b6;border-radius:3px;box-sizing:border-box;background:linear-gradient(#c6d8ec 0%,#b3c9e2 45%,#9fb9d8 50%,#b0c8e4 100%)"></div>
<div class="a" style="left:1456px;top:119px;width:8px;height:6px;border:2px solid #4f6680;box-sizing:content-box;background:#d8e4f0;border-radius:1px"></div>
<div class="a" style="left:1478px;top:115px;width:32px;height:18px;border:1px solid #4a1a1a;border-radius:3px;box-sizing:border-box;background:linear-gradient(#eaa391 0%,#d9826c 45%,#c0412a 50%,#c8553d 100%)"></div>
<svg class="a" style="left:1487px;top:118px;" width="14" height="11" viewBox="0 0 14 11"><path d="M2.5 2l9 7.5M11.5 2l-9 7.5" stroke="#3c4a5a" stroke-width="3.6" stroke-linecap="round"/><path d="M2.5 2l9 7.5M11.5 2l-9 7.5" stroke="#fff" stroke-width="2" stroke-linecap="round"/></svg>
<div class="a t" style="left:244px;top:144px;">卡密规则</div>
<div class="a t" style="left:302px;top:144px;">卡密列表</div>
<div class="a t" style="left:360px;top:144px;">用户管理</div>
<div class="a t" style="left:418px;top:144px;">在线管理</div>
<div class="a t" style="left:476px;top:144px;">黑名单管理</div>
<div class="a t" style="left:546px;top:144px;">试用信息</div>
<div class="a t" style="left:604px;top:144px;">日在线量</div>
<div class="a t" style="left:662px;top:144px;">环境记录</div>
<div class="a t" style="left:720px;top:144px;">云插件JS</div>
<div class="a t" style="left:778px;top:144px;">代理管理</div>
<div class="a t" style="left:836px;top:144px;">远程文件</div>
<div class="a t" style="left:894px;top:144px;">查询销量</div>
<div class="a t" style="left:952px;top:144px;">运行日志</div>
<div class="a" style="left:237px;top:159px;width:1276px;height:1px;background:#a0a0a0"></div>
<svg class="a" style="left:237px;top:160px" width="1276" height="649" shape-rendering="crispEdges"><defs><pattern id="dots" patternUnits="userSpaceOnUse" x="0" y="6" width="8" height="8"><rect x="0" y="0" width="1" height="1" fill="#000"/></pattern></defs><rect width="1276" height="649" fill="url(#dots)"/></svg>
<div class="a" style="left:450px;top:160px;width:1051px;height:11px;background:#fff"></div>
<div class="a" style="left:350px;top:171px;width:99px;height:19px;background:#fff;border-top:1px solid #a0a0a0;border-left:1px solid #a0a0a0;border-right:1px solid #fff;border-bottom:1px solid #fff;box-shadow:inset 1px 1px 0 #696969;box-sizing:border-box;"></div>
<div class="a" style="left:431px;top:173px;width:16px;height:15px;background:#f0f0f0;border-top:1px solid #fff;border-left:1px solid #fff;border-right:1px solid #a0a0a0;border-bottom:1px solid #a0a0a0;box-shadow:1px 1px 0 #696969;box-sizing:border-box;"><svg class="a" style="left:3px;top:4px" width="7" height="4" viewBox="0 0 7 4" shape-rendering="crispEdges"><path d="M0 0h7v1h-1v1h-1v1h-1v1h-1v-1h-1v-1h-1v-1h-1z" fill="#000"/></svg></div>
<div class="a" style="left:282px;top:239px;width:106px;height:24px;background:#f0f0f0"></div>
<div class="a t" style="left:327px;top:245px;font-size:14px;line-height:16px;color:#7f7f7f;font-weight:bold">首页</div>
<div class="a" style="left:282px;top:274px;width:106px;height:24px;background:#f0f0f0"></div>
<div class="a t" style="left:327px;top:280px;font-size:14px;line-height:16px;color:#7f7f7f;font-weight:bold">日志</div>
<div class="a" style="left:282px;top:309px;width:26px;height:24px;background:#f0f0f0"></div>
<div class="a" style="left:313px;top:309px;width:82px;height:24px;background:#f0f0f0"></div>
<div class="a t" style="left:327px;top:315px;font-size:14px;line-height:16px;color:#7f7f7f;font-weight:bold">软件设置</div>
<div class="a" style="left:282px;top:344px;width:26px;height:24px;background:#f0f0f0"></div>
<div class="a" style="left:313px;top:344px;width:82px;height:24px;background:#f0f0f0"></div>
<div class="a t" style="left:327px;top:350px;font-size:14px;line-height:16px;color:#7f7f7f;font-weight:bold">用户管理</div>
<div class="a" style="left:282px;top:379px;width:26px;height:24px;background:#f0f0f0"></div>
<div class="a" style="left:313px;top:379px;width:82px;height:24px;background:#f0f0f0"></div>
<div class="a t" style="left:327px;top:385px;font-size:14px;line-height:16px;color:#7f7f7f;font-weight:bold">在线用户</div>
<div class="a" style="left:282px;top:414px;width:26px;height:24px;background:#f0f0f0"></div>
<div class="a" style="left:313px;top:414px;width:82px;height:24px;background:#f0f0f0"></div>
<div class="a t" style="left:327px;top:420px;font-size:14px;line-height:16px;color:#7f7f7f;font-weight:bold">卡密管理</div>
<div class="a" style="left:282px;top:449px;width:26px;height:24px;background:#f0f0f0"></div>
<div class="a" style="left:313px;top:449px;width:82px;height:24px;background:#f0f0f0"></div>
<div class="a t" style="left:327px;top:455px;font-size:14px;line-height:16px;color:#7f7f7f;font-weight:bold">代理管理</div>
<div class="a" style="left:282px;top:484px;width:26px;height:24px;background:#f0f0f0"></div>
<div class="a" style="left:313px;top:484px;width:82px;height:24px;background:#f0f0f0"></div>
<div class="a t" style="left:327px;top:490px;font-size:14px;line-height:16px;color:#7f7f7f;font-weight:bold">日在线量</div>
<div class="a" style="left:282px;top:519px;width:26px;height:24px;background:#f0f0f0"></div>
<div class="a" style="left:313px;top:519px;width:82px;height:24px;background:#f0f0f0"></div>
<div class="a t" style="left:327px;top:525px;font-size:14px;line-height:16px;color:#7f7f7f;font-weight:bold">环境记录</div>
<div class="a" style="left:282px;top:554px;width:26px;height:24px;background:#f0f0f0"></div>
<div class="a" style="left:313px;top:554px;width:82px;height:24px;background:#f0f0f0"></div>
<div class="a t" style="left:327px;top:560px;font-size:14px;line-height:16px;color:#7f7f7f;font-weight:bold">试用信息</div>
<div class="a" style="left:282px;top:589px;width:26px;height:24px;background:#f0f0f0"></div>
<div class="a" style="left:313px;top:589px;width:82px;height:24px;background:#f0f0f0"></div>
<div class="a t" style="left:327px;top:595px;font-size:14px;line-height:16px;color:#7f7f7f;font-weight:bold">函数算法</div>
<div class="a" style="left:282px;top:624px;width:26px;height:24px;background:#f0f0f0"></div>
<div class="a" style="left:313px;top:624px;width:82px;height:24px;background:#f0f0f0"></div>
<div class="a t" style="left:327px;top:630px;font-size:14px;line-height:16px;color:#7f7f7f;font-weight:bold">插件数据</div>
<div class="a" style="left:282px;top:659px;width:26px;height:24px;background:#f0f0f0"></div>
<div class="a" style="left:313px;top:659px;width:82px;height:24px;background:#f0f0f0"></div>
<div class="a t" style="left:327px;top:665px;font-size:14px;line-height:16px;color:#7f7f7f;font-weight:bold">SQL 数据</div>
<div class="a" style="left:282px;top:694px;width:26px;height:24px;background:#f0f0f0"></div>
<div class="a" style="left:313px;top:694px;width:82px;height:24px;background:#f0f0f0"></div>
<div class="a t" style="left:327px;top:700px;font-size:14px;line-height:16px;color:#7f7f7f;font-weight:bold">黑 - 名单</div>
<div class="a" style="left:282px;top:729px;width:26px;height:24px;background:#f0f0f0"></div>
<div class="a" style="left:313px;top:729px;width:82px;height:24px;background:#f0f0f0"></div>
<div class="a t" style="left:327px;top:735px;font-size:14px;line-height:16px;color:#7f7f7f;font-weight:bold">添加软件</div>
<svg class="a" style="left:285px;top:240px;" width="20" height="21" viewBox="0 0 20 21"><path d="M10 1l9 8h-2v10h-5v-6h-4v6h-5v-10h-2z" fill="#f9a46e" stroke="#6b6b6b" stroke-width="1.3" stroke-linejoin="round"/></svg>
<svg class="a" style="left:285px;top:275px;" width="20" height="21" viewBox="0 0 20 21"><path d="M2 1.5h10l6 6v10.5q0 1.5-1.5 1.5h-13q-1.5 0-1.5-1.5z" fill="#fff" stroke="#6b6b6b" stroke-width="1.3"/><path d="M12 1.5v6h6" fill="#ddd" stroke="#6b6b6b" stroke-width="1.3"/><path d="M5 10h4M5 13h9M5 16h9" stroke="#6b6b6b" stroke-width="1.3"/></svg>
<svg class="a" style="left:285px;top:313px;" width="20" height="21" viewBox="0 0 20 21"><rect x="1" y="1" width="18" height="12" rx="2" fill="#b8ecfa" stroke="#6b6b6b" stroke-width="1.4"/><rect x="1.7" y="10" width="16.6" height="2.4" fill="#bbb"/><path d="M10 13v4M5 17.5h10" stroke="#6b6b6b" stroke-width="1.3"/></svg>
<svg class="a" style="left:285px;top:345px;" width="20" height="21" viewBox="0 0 20 21"><rect x="2.5" y="0.8" width="16" height="18.5" rx="2" fill="#fdb94a" stroke="#6b6b6b" stroke-width="1.3"/><circle cx="10.5" cy="7.5" r="2.8" fill="none" stroke="#6b6b6b" stroke-width="1.2"/><path d="M6 14q4.5-6 9 0z" fill="none" stroke="#6b6b6b" stroke-width="1.2"/><path d="M1 5h3M1 9h3M1 13h3" stroke="#6b6b6b" stroke-width="1.2"/></svg>
<svg class="a" style="left:285px;top:381px;" width="20" height="21" viewBox="0 0 20 21"><path d="M4 10l12-6M4 10l12 6" stroke="#777" stroke-width="1.3"/><circle cx="4" cy="10" r="3.3" fill="#7fb2f0" stroke="#6b6b6b" stroke-width="1.1"/><circle cx="16" cy="3.5" r="2.8" fill="#c4e67e" stroke="#6b6b6b" stroke-width="1.1"/><circle cx="16" cy="16.5" r="2.8" fill="#e8a4ea" stroke="#6b6b6b" stroke-width="1.1"/></svg>
<svg class="a" style="left:285px;top:416px;" width="20" height="21" viewBox="0 0 20 21"><rect x="1" y="1.5" width="18" height="18" rx="2.5" fill="#ececec" stroke="#6b6b6b" stroke-width="1.4"/><path d="M6 15l1-4 8-8 3 3-8 8z" fill="#fdb94a" stroke="#6b6b6b" stroke-width="1.1"/><path d="M13.5 4.5l3 3" stroke="#e05a5a" stroke-width="2"/></svg>
<svg class="a" style="left:285px;top:452px;" width="20" height="21" viewBox="0 0 20 21"><path d="M10 1.5c5 0 9 3 9 7.5s-4 7.5-9 7.5q-1.5 0-3-0.4l-4 2.8 0.8-4q-2.8-2-2.8-5.9c0-4.5 4-7.5 9-7.5z" fill="#a4dd6c" stroke="#6b6b6b" stroke-width="1.3"/><circle cx="6" cy="9" r="1" fill="#fff"/><circle cx="10" cy="9" r="1" fill="#fff"/><circle cx="14" cy="9" r="1" fill="#fff"/></svg>
<svg class="a" style="left:285px;top:485px;" width="20" height="21" viewBox="0 0 20 21"><circle cx="10" cy="10" r="9" fill="#8cc0f8" stroke="#6b6b6b" stroke-width="1.4"/><circle cx="10" cy="10" r="7.6" fill="none" stroke="#fff" stroke-width="1"/><path d="M9 4.5v6h4.5" fill="none" stroke="#444" stroke-width="1.6"/></svg>
<svg class="a" style="left:285px;top:520px;" width="20" height="21" viewBox="0 0 20 21"><rect x="1" y="1" width="18" height="18" rx="3" fill="#fdb94a" stroke="#6b6b6b" stroke-width="1.3"/><rect x="11" y="7" width="8" height="6" rx="1.5" fill="#e06a4a" stroke="#6b6b6b" stroke-width="1.1"/></svg>
<svg class="a" style="left:285px;top:555px;" width="20" height="21" viewBox="0 0 20 21"><rect x="1" y="1" width="8" height="8" rx="2" fill="#6aaaf2" stroke="#6b6b6b" stroke-width="1"/><circle cx="15" cy="5" r="4" fill="#f26a6a" stroke="#6b6b6b" stroke-width="1"/><rect x="1" y="11" width="8" height="8" rx="2" fill="#a4dd6c" stroke="#6b6b6b" stroke-width="1"/><rect x="11" y="11" width="8" height="8" rx="2" fill="#fde06a" stroke="#6b6b6b" stroke-width="1"/></svg>
<svg class="a" style="left:285px;top:590px;" width="20" height="21" viewBox="0 0 20 21"><path d="M1 5v-4h4M15 1h4v4M19 15v4h-4M5 19h-4v-4" fill="none" stroke="#6b6b6b" stroke-width="1.4"/><rect x="4.5" y="4.5" width="11" height="11" rx="2" fill="#f26a6a" stroke="#6b6b6b" stroke-width="1.2"/></svg>
<svg class="a" style="left:285px;top:626px;" width="20" height="21" viewBox="0 0 20 21"><path d="M8.5 1h3l0.5 2.5 2 1 2.3-1.3 2.1 2.1-1.3 2.3 1 2 2.5 0.5v3l-2.5 0.5-1 2 1.3 2.3-2.1 2.1-2.3-1.3-2 1-0.5 2.5h-3l-0.5-2.5-2-1-2.3 1.3-2.1-2.1 1.3-2.3-1-2-2.5-0.5v-3l2.5-0.5 1-2-1.3-2.3 2.1-2.1 2.3 1.3 2-1z" fill="#7a8aa0" stroke="#5a5a5a" stroke-width="0.8"/><circle cx="10" cy="10" r="3.5" fill="#f0f0f0" stroke="#5a5a5a" stroke-width="1"/></svg>
<svg class="a" style="left:285px;top:659px;" width="20" height="21" viewBox="0 0 20 21"><path d="M5.5 9v-3.5a4.5 4.5 0 0 1 9 0v3.5" fill="none" stroke="#777" stroke-width="1.6"/><rect x="1" y="8.5" width="18" height="12" rx="2" fill="#fddb6a" stroke="#6b6b6b" stroke-width="1.3"/><circle cx="10" cy="14" r="1.4" fill="#444"/></svg>
<svg class="a" style="left:285px;top:695px;" width="20" height="21" viewBox="0 0 20 21"><path d="M2 4h16M7 4v-2.5h6v2.5" fill="none" stroke="#777" stroke-width="1.4"/><path d="M3.5 4.5l1 14.5h11l1-14.5" fill="#f0f0f0" stroke="#777" stroke-width="1.4"/><path d="M7.5 8v8M10 8v8M12.5 8v8" stroke="#777" stroke-width="1.2"/></svg>
<svg class="a" style="left:285px;top:736px;" width="20" height="21" viewBox="0 0 20 21"><circle cx="12" cy="8" r="7.5" fill="#fdc12a"/><path d="M12 0.5a7.5 7.5 0 0 1 0 15z" fill="#f7a21a"/><circle cx="6" cy="8" r="5" fill="#f56a4a" opacity="0.9"/><text x="3.5" y="11" font-family="Liberation Sans" font-size="7" fill="#fff">P</text></svg>
<div class="a" style="left:237px;top:796px;width:1275px;height:3px;background:#f0f0f0"></div>
<div class="a" style="left:237px;top:799px;width:1275px;height:10px;background:#f0f0f0;border-top:1px solid #a0a0a0;box-sizing:border-box"></div>
<div class="a" style="left:237px;top:770px;width:94px;height:26px;background:#f0f0f0"></div>
<div class="a t" style="left:248px;top:777px;font-size:16px;line-height:18px;color:#f02020">[ 离线版 ]</div>
<div class="a" style="left:451px;top:171px;width:1050px;height:632px;background:#f0f0f0;border:1px solid #000;box-sizing:border-box;box-shadow:inset 1px 1px 0 #fff"></div>
<svg class="a" style="left:478px;top:199px;" width="7" height="7" viewBox="0 0 7 7"><circle cx="3" cy="3" r="3" fill="#000"/></svg>
<div class="a t" style="left:491px;top:190px;font-family:'Liberation Serif',serif;font-size:19px;line-height:22px;font-weight:bold">首页</div>
<div class="a t" style="left:540px;top:199px;font-family:'Liberation Mono',monospace;font-size:10px;line-height:12px">Homepage</div>
<div class="a" style="left:948px;top:187px;width:529px;height:28px;border:1px solid #a0a0a0;box-shadow:inset 1px 1px 0 #fff,1px 1px 0 #fff;box-sizing:border-box"></div>
<div class="a t" style="left:951px;top:195px;">最多显示</div>
<div class="a" style="left:1003px;top:194px;width:40px;height:16px;background:#fff;border:1px solid #7a7a7a;box-sizing:border-box;font-size:12px;line-height:14px;white-space:nowrap;text-align:center">100</div>
<div class="a t" style="left:1047px;top:195px;">条记录</div>
<div class="a" style="left:1086px;top:194px;width:32px;height:17px;background:#f0f0f0;border-top:1px solid #fff;border-left:1px solid #fff;border-right:1px solid #a0a0a0;border-bottom:1px solid #a0a0a0;box-shadow:1px 1px 0 #696969;box-sizing:border-box;text-align:center;font-size:12px;line-height:14px;white-space:nowrap;">首页</div>
<div class="a" style="left:1118px;top:194px;width:32px;height:17px;background:#f0f0f0;border-top:1px solid #fff;border-left:1px solid #fff;border-right:1px solid #a0a0a0;border-bottom:1px solid #a0a0a0;box-shadow:1px 1px 0 #696969;box-sizing:border-box;text-align:center;font-size:12px;line-height:14px;white-space:nowrap;">&lt;&lt;</div>
<div class="a" style="left:1151px;top:194px;width:74px;height:16px;background:#fff;border:1px solid #7a7a7a;box-sizing:border-box;font-size:12px;line-height:14px;white-space:nowrap;text-align:center;padding-left:0px">0/99</div>
<div class="a" style="left:1227px;top:194px;width:31px;height:17px;background:#f0f0f0;border-top:1px solid #fff;border-left:1px solid #fff;border-right:1px solid #a0a0a0;border-bottom:1px solid #a0a0a0;box-shadow:1px 1px 0 #696969;box-sizing:border-box;text-align:center;font-size:12px;line-height:14px;white-space:nowrap;">&gt;&gt;</div>
<div class="a" style="left:1259px;top:194px;width:32px;height:17px;background:#f0f0f0;border-top:1px solid #fff;border-left:1px solid #fff;border-right:1px solid #a0a0a0;border-bottom:1px solid #a0a0a0;box-shadow:1px 1px 0 #696969;box-sizing:border-box;text-align:center;font-size:12px;line-height:14px;white-space:nowrap;">尾页</div>
<div class="a" style="left:1292px;top:194px;width:43px;height:16px;background:#fff;border:1px solid #7a7a7a;box-sizing:border-box;font-size:12px;line-height:14px;white-space:nowrap;"></div>
<div class="a" style="left:1338px;top:194px;width:32px;height:17px;background:#f0f0f0;border-top:1px solid #fff;border-left:1px solid #fff;border-right:1px solid #a0a0a0;border-bottom:1px solid #a0a0a0;box-shadow:1px 1px 0 #696969;box-sizing:border-box;text-align:center;font-size:12px;line-height:14px;white-space:nowrap;font-size:13px">Go</div>
<div class="a t" style="left:1374px;top:195px;">总数：0</div>
<div class="a" style="left:478px;top:234px;width:259px;height:313px;border:1px solid #a0a0a0;box-shadow:inset 1px 1px 0 #fff,1px 1px 0 #fff;box-sizing:border-box"></div>
<div class="a t" style="left:486px;top:227px;background:#f0f0f0;padding:0 1px">全局设置</div>
<div class="a" style="left:494px;top:256px;width:108px;height:23px;background:#f0f0f0;border-top:1px solid #fff;border-left:1px solid #fff;border-right:1px solid #a0a0a0;border-bottom:1px solid #a0a0a0;box-shadow:1px 1px 0 #696969;box-sizing:border-box;text-align:center;font-size:12px;line-height:20px;white-space:nowrap;">通讯配置</div>
<div class="a" style="left:602px;top:256px;width:120px;height:23px;background:#f0f0f0;border-top:1px solid #fff;border-left:1px solid #fff;border-right:1px solid #a0a0a0;border-bottom:1px solid #a0a0a0;box-shadow:1px 1px 0 #696969;box-sizing:border-box;text-align:center;font-size:12px;line-height:20px;white-space:nowrap;">软件位管理/选择</div>
<div class="a t" style="left:515px;top:376px;font-size:19px;line-height:22px;color:#1e90ff;font-weight:bold">实时在线</div>
<div class="a t" style="left:624px;top:376px;font-size:19px;line-height:22px;color:#1e90ff;font-weight:bold">今日激活</div>
<div class="a t" style="left:515px;top:461px;font-size:19px;line-height:22px;color:#1e90ff;font-weight:bold">今日登录</div>
<div class="a t" style="left:624px;top:461px;font-size:19px;line-height:22px;color:#1e90ff;font-weight:bold">累计激活</div>
<div class="a" style="left:503px;top:418px;width:100px;height:26px;border:1px solid #7a7a7a;box-sizing:border-box;text-align:center;font-size:16px;line-height:24px;font-weight:bold">0</div>
<div class="a" style="left:611px;top:418px;width:100px;height:26px;border:1px solid #7a7a7a;box-sizing:border-box;text-align:center;font-size:16px;line-height:24px;font-weight:bold">0</div>
<div class="a" style="left:503px;top:498px;width:100px;height:26px;border:1px solid #7a7a7a;box-sizing:border-box;text-align:center;font-size:16px;line-height:24px;font-weight:bold">0</div>
<div class="a" style="left:611px;top:498px;width:100px;height:26px;border:1px solid #7a7a7a;box-sizing:border-box;text-align:center;font-size:16px;line-height:24px;font-weight:bold">0</div>
<div class="a" style="left:751px;top:234px;width:320px;height:313px;border:1px solid #a0a0a0;box-shadow:inset 1px 1px 0 #fff,1px 1px 0 #fff;box-sizing:border-box"></div>
<div class="a t" style="left:758px;top:227px;background:#f0f0f0;padding:0 1px">云文本变量(登录之后可获取)</div>
<div class="a" style="left:760px;top:496px;width:300px;height:27px;background:#f0f0f0;border-top:1px solid #fff;border-left:1px solid #fff;border-right:1px solid #a0a0a0;border-bottom:1px solid #a0a0a0;box-shadow:1px 1px 0 #696969;box-sizing:border-box;text-align:center;font-size:12px;line-height:24px;white-space:nowrap;">保存云文本变量</div>
<div class="a" style="left:1085px;top:234px;width:392px;height:92px;border:1px solid #a0a0a0;box-shadow:inset 1px 1px 0 #fff,1px 1px 0 #fff;box-sizing:border-box"></div>
<div class="a t" style="left:1093px;top:227px;background:#f0f0f0;padding:0 1px">系统设置(  一般默认即可,没有必要无需修改  )</div>
<div class="a t" style="left:1101px;top:253px;">心跳未响应超时(单位/秒)：</div>
<div class="a t" style="left:1101px;top:278px;">每日请求VMP授权次数：</div>
<div class="a" style="left:1265px;top:250px;width:80px;height:20px;border:1px solid #7a7a7a;box-sizing:border-box;text-align:center;font-size:13px;line-height:18px;font-weight:bold">20</div>
<div class="a" style="left:1266px;top:276px;width:78px;height:18px;background:#f0f0f0;border-top:1px solid #a0a0a0;border-left:1px solid #a0a0a0;border-right:1px solid #fff;border-bottom:1px solid #fff;box-shadow:inset 1px 1px 0 #696969;box-sizing:border-box;"></div>
<div class="a t" style="left:1270px;top:278px;">5</div>
<div class="a" style="left:1326px;top:278px;width:16px;height:14px;background:#f0f0f0;border-top:1px solid #fff;border-left:1px solid #fff;border-right:1px solid #a0a0a0;border-bottom:1px solid #a0a0a0;box-shadow:1px 1px 0 #696969;box-sizing:border-box;"><svg class="a" style="left:3px;top:4px" width="7" height="4" viewBox="0 0 7 4" shape-rendering="crispEdges"><path d="M0 0h7v1h-1v1h-1v1h-1v1h-1v-1h-1v-1h-1v-1h-1z" fill="#000"/></svg></div>
<svg class="a" style="left:1418px;top:246px;" width="21" height="24" viewBox="0 0 21 24"><path d="M10.5 0.5l9.5 3.5v8q0 7-9.5 11.5q-9.5-4.5-9.5-11.5v-8z" fill="#2fb464"/><path d="M5.5 11.5l3.5 3.5 6.5-6.5" fill="none" stroke="#fff" stroke-width="2.2"/></svg>
<div class="a" style="left:1400px;top:277px;width:60px;height:20px;background:#f0f0f0;border-top:1px solid #fff;border-left:1px solid #fff;border-right:1px solid #a0a0a0;border-bottom:1px solid #a0a0a0;box-shadow:1px 1px 0 #696969;box-sizing:border-box;text-align:center;font-size:12px;line-height:17px;white-space:nowrap;">配置</div>
<div class="a" style="left:1101px;top:302px;width:360px;height:24px;background:#f0f0f0;border-top:1px solid #fff;border-left:1px solid #fff;border-right:1px solid #a0a0a0;border-bottom:1px solid #a0a0a0;box-shadow:1px 1px 0 #696969;box-sizing:border-box;text-align:center;font-size:12px;line-height:21px;white-space:nowrap;">保存系统设置</div>
<div class="a" style="left:1085px;top:328px;width:1px;height:15px;background:#a0a0a0"></div>
<div class="a" style="left:1476px;top:328px;width:1px;height:15px;background:#a0a0a0"></div>
<div class="a" style="left:1085px;top:350px;width:392px;height:92px;border:1px solid #a0a0a0;box-shadow:inset 1px 1px 0 #fff,1px 1px 0 #fff;box-sizing:border-box"></div>
<div class="a t" style="left:1093px;top:343px;background:#f0f0f0;padding:0 1px">全体加时/点</div>
<div class="a" style="left:1101px;top:381px;width:361px;height:34px;border-top:1px solid #fff;border-left:1px solid #fff;border-right:1px solid #696969;border-bottom:1px solid #696969;box-shadow:inset -1px -1px 0 #a0a0a0;box-sizing:border-box"></div>
<div class="a" style="left:1101px;top:362px;width:63px;height:21px;background:#f0f0f0;border-top:1px solid #fff;border-left:1px solid #fff;border-right:1px solid #696969;box-sizing:border-box;border-radius:2px 2px 0 0"></div>
<div class="a t" style="left:1108px;top:365px;">加时(卡)</div>
<div class="a" style="left:1164px;top:365px;width:58px;height:16px;background:#f0f0f0;border-top:1px solid #fff;border-left:1px solid #fff;border-right:1px solid #696969;box-sizing:border-box;border-radius:2px 2px 0 0"></div>
<div class="a t" style="left:1169px;top:367px;">加点(卡)</div>
<div class="a" style="left:1222px;top:365px;width:72px;height:16px;background:#f0f0f0;border-top:1px solid #fff;border-left:1px solid #fff;border-right:1px solid #696969;box-sizing:border-box;border-radius:2px 2px 0 0"></div>
<div class="a t" style="left:1227px;top:367px;">加时(用户)</div>
<div class="a" style="left:1294px;top:365px;width:73px;height:16px;background:#f0f0f0;border-top:1px solid #fff;border-left:1px solid #fff;border-right:1px solid #696969;box-sizing:border-box;border-radius:2px 2px 0 0"></div>
<div class="a t" style="left:1299px;top:367px;">加点(用户)</div>
<div class="a" style="left:1376px;top:367px;width:13px;height:13px;background:#fff;border:1px solid #7a7a7a;box-sizing:border-box"></div>
<div class="a t" style="left:1394px;top:366px;">包含到期</div>
<div class="a" style="left:1111px;top:387px;width:143px;height:19px;background:#f0f0f0;border-top:1px solid #a0a0a0;border-left:1px solid #a0a0a0;border-right:1px solid #fff;border-bottom:1px solid #fff;box-shadow:inset 1px 1px 0 #696969;box-sizing:border-box;"></div>
<div class="a" style="left:1236px;top:389px;width:16px;height:15px;background:#f0f0f0;border-top:1px solid #fff;border-left:1px solid #fff;border-right:1px solid #a0a0a0;border-bottom:1px solid #a0a0a0;box-shadow:1px 1px 0 #696969;box-sizing:border-box;"><svg class="a" style="left:3px;top:4px" width="7" height="4" viewBox="0 0 7 4" shape-rendering="crispEdges"><path d="M0 0h7v1h-1v1h-1v1h-1v1h-1v-1h-1v-1h-1v-1h-1z" fill="#000"/></svg></div>
<div class="a t" style="left:1266px;top:388px;">增加</div>
<div class="a" style="left:1301px;top:387px;width:56px;height:20px;background:#fff;border:1px solid #7a7a7a;box-sizing:border-box;font-size:12px;line-height:18px;white-space:nowrap;background:#f0f0f0"></div>
<div class="a" style="left:1376px;top:387px;width:48px;height:19px;background:#f0f0f0;border-top:1px solid #a0a0a0;border-left:1px solid #a0a0a0;border-right:1px solid #fff;border-bottom:1px solid #fff;box-shadow:inset 1px 1px 0 #696969;box-sizing:border-box;"></div>
<div class="a t" style="left:1380px;top:389px;">秒钟</div>
<div class="a" style="left:1406px;top:389px;width:16px;height:15px;background:#f0f0f0;border-top:1px solid #fff;border-left:1px solid #fff;border-right:1px solid #a0a0a0;border-bottom:1px solid #a0a0a0;box-shadow:1px 1px 0 #696969;box-sizing:border-box;"><svg class="a" style="left:3px;top:4px" width="7" height="4" viewBox="0 0 7 4" shape-rendering="crispEdges"><path d="M0 0h7v1h-1v1h-1v1h-1v1h-1v-1h-1v-1h-1v-1h-1z" fill="#000"/></svg></div>
<div class="a" style="left:1101px;top:417px;width:360px;height:24px;background:#f0f0f0;border-top:1px solid #fff;border-left:1px solid #fff;border-right:1px solid #a0a0a0;border-bottom:1px solid #a0a0a0;box-shadow:1px 1px 0 #696969;box-sizing:border-box;text-align:center;font-size:12px;line-height:21px;white-space:nowrap;">批量加时/点</div>
<div class="a" style="left:1085px;top:444px;width:1px;height:15px;background:#a0a0a0"></div>
<div class="a" style="left:1476px;top:444px;width:1px;height:15px;background:#a0a0a0"></div>
<div class="a" style="left:1085px;top:444px;width:392px;height:103px;border:1px solid #a0a0a0;box-shadow:inset 1px 1px 0 #fff,1px 1px 0 #fff;box-sizing:border-box"></div>
<div class="a" style="left:1105px;top:463px;width:12px;height:12px;background:#fff;border:1px solid #7a7a7a;box-sizing:border-box"></div>
<div class="a t" style="left:1123px;top:462px;font-weight:bold">禁止登录</div>
<div class="a" style="left:1105px;top:488px;width:12px;height:12px;background:#fff;border:1px solid #7a7a7a;box-sizing:border-box"></div>
<div class="a t" style="left:1123px;top:487px;font-weight:bold">禁止新卡登录</div>
<div class="a" style="left:1105px;top:513px;width:12px;height:12px;background:#fff;border:1px solid #7a7a7a;box-sizing:border-box"></div>
<div class="a t" style="left:1123px;top:512px;font-weight:bold">软件停用</div>
<div class="a" style="left:1231px;top:463px;width:12px;height:12px;background:#fff;border:1px solid #7a7a7a;box-sizing:border-box"></div>
<div class="a t" style="left:1249px;top:462px;font-weight:bold">禁止充值</div>
<div class="a" style="left:1231px;top:488px;width:12px;height:12px;background:#fff;border:1px solid #7a7a7a;box-sizing:border-box"></div>
<div class="a t" style="left:1249px;top:487px;font-weight:bold">禁止新用户登录</div>
<div class="a" style="left:1231px;top:513px;width:12px;height:12px;background:#fff;border:1px solid #7a7a7a;box-sizing:border-box"></div>
<div class="a t" style="left:1249px;top:512px;font-weight:bold">禁止可踢出在线</div>
<div class="a" style="left:1357px;top:463px;width:12px;height:12px;background:#fff;border:1px solid #7a7a7a;box-sizing:border-box"></div>
<div class="a t" style="left:1375px;top:462px;font-weight:bold">禁止注册</div>
<div class="a" style="left:1357px;top:488px;width:12px;height:12px;background:#fff;border:1px solid #7a7a7a;box-sizing:border-box"></div>
<div class="a t" style="left:1375px;top:487px;font-weight:bold">禁止代理登录</div>
<div class="a" style="left:1357px;top:513px;width:12px;height:12px;background:#fff;border:1px solid #7a7a7a;box-sizing:border-box"></div>
<div class="a t" style="left:1375px;top:512px;font-weight:bold">禁止查询在线</div>
<svg class="a" style="left:478px;top:576px;" width="7" height="7" viewBox="0 0 7 7"><circle cx="3" cy="3" r="3" fill="#000"/></svg>
<div class="a t" style="left:491px;top:567px;font-family:'Liberation Serif',serif;font-size:19px;line-height:22px;font-weight:bold">更新日志</div>
<div class="a t" style="left:580px;top:576px;font-family:'Liberation Mono',monospace;font-size:10px;line-height:12px">Changelog</div>
<div class="a" style="left:478px;top:605px;width:999px;height:172px;border:1px solid #a0a0a0;box-shadow:inset 1px 1px 0 #fff;box-sizing:border-box"></div>
<div class="a t" style="left:489px;top:613px;font-family:'Liberation Serif',serif;font-size:16px;line-height:18px">【12月1日】</div>
<div class="a t" style="left:488px;top:645px;font-family:'Liberation Serif',serif;font-size:16px;line-height:18px">1、修复同台电脑多开BUG</div>
<div class="a t" style="left:488px;top:661px;font-family:'Liberation Serif',serif;font-size:16px;line-height:18px">2、新增禁止新卡登录</div>
<div class="a t" style="left:488px;top:677px;font-family:'Liberation Serif',serif;font-size:16px;line-height:18px">3、新增禁止新用户登录</div>
<div class="a t" style="left:488px;top:693px;font-family:'Liberation Serif',serif;font-size:16px;line-height:18px">4、新增禁止代理登录</div>
<div class="a t" style="left:488px;top:709px;font-family:'Liberation Serif',serif;font-size:16px;line-height:18px">5、新增直链返回功能</div>
<div class="a t" style="left:488px;top:725px;font-family:'Liberation Serif',serif;font-size:16px;line-height:18px">6、新增数据统计功能</div>
<div class="a t" style="left:488px;top:741px;font-family:'Liberation Serif',serif;font-size:16px;line-height:18px">7、新增在线批量下线相关功能</div>
<div class="a t" style="left:488px;top:757px;font-family:'Liberation Serif',serif;font-size:16px;line-height:18px">8、修复生成卡密后不自动刷新问题</div>
<div class="a" style="left:1460px;top:614px;width:1px;height:161px;background:#fff"></div>
<div class="a" style="left:1476px;top:614px;width:1px;height:162px;background:#fff"></div>
<svg class="a" style="left:1463px;top:618px;" width="11" height="7" viewBox="0 0 11 7"><path d="M1 6l4.5-4.5 4.5 4.5" fill="none" stroke="#606060" stroke-width="1.5"/></svg>
<div class="a" style="left:1461px;top:631px;width:15px;height:24px;background:#cdcdcd"></div>
<svg class="a" style="left:1463px;top:762px;" width="11" height="7" viewBox="0 0 11 7"><path d="M1 1l4.5 4.5 4.5-4.5" fill="none" stroke="#606060" stroke-width="1.5"/></svg>
<div class="a" style="left:237px;top:803px;width:1263px;height:6px;overflow:hidden">
</div>
<div class="a" style="left:454px;top:803px;width:1px;height:6px;background:#a0a0a0"></div>
<div class="a" style="left:455px;top:803px;width:1px;height:6px;background:#fff"></div>
<div class="a" style="left:670px;top:803px;width:1px;height:6px;background:#a0a0a0"></div>
<div class="a" style="left:671px;top:803px;width:1px;height:6px;background:#fff"></div>
<div class="a" style="left:884px;top:803px;width:1px;height:6px;background:#a0a0a0"></div>
<div class="a" style="left:885px;top:803px;width:1px;height:6px;background:#fff"></div>
<div class="a" style="left:1100px;top:803px;width:1px;height:6px;background:#a0a0a0"></div>
<div class="a" style="left:1101px;top:803px;width:1px;height:6px;background:#fff"></div>
<div class="a" style="left:1315px;top:803px;width:1px;height:6px;background:#a0a0a0"></div>
<div class="a" style="left:1316px;top:803px;width:1px;height:6px;background:#fff"></div>
<svg class="a" style="left:244px;top:801px;" width="20" height="8" viewBox="0 0 20 8"><ellipse cx="10" cy="10" rx="9" ry="9" fill="#fff" stroke="#4aa8e0" stroke-width="2.5"/><path d="M3 4q2-3 5-3M17 4q-2-3-5-3" stroke="#8ccfef" stroke-width="3" fill="none"/><path d="M10 9l-4 -2M10 9l5 -1" stroke="#c33" stroke-width="1"/></svg>
<div class="a" style="left:274px;top:803px;height:6px;overflow:hidden"><div class="t" style="position:relative;top:0px;font-size:12px;line-height:12px;">运行时间：</div></div>
<svg class="a" style="left:458px;top:802px;" width="28" height="7" viewBox="0 0 28 7"><text x="0" y="12" font-family="Liberation Sans" font-size="13" font-weight="bold" fill="#d22">1</text><text x="8" y="12" font-family="Liberation Sans" font-size="13" font-weight="bold" fill="#3a8ee6">2</text><text x="17" y="12" font-family="Liberation Sans" font-size="13" font-weight="bold" fill="#3cb44a">3</text></svg>
<div class="a" style="left:493px;top:803px;height:6px;overflow:hidden"><div class="t" style="position:relative;top:0px;font-size:12px;line-height:12px;">启动IP：</div></div>
<svg class="a" style="left:678px;top:803px;" width="24" height="6" viewBox="0 0 24 6"><ellipse cx="12" cy="10" rx="11" ry="9" fill="#3a8ed8"/></svg>
<div class="a" style="left:708px;top:803px;height:6px;overflow:hidden"><div class="t" style="position:relative;top:0px;font-size:12px;line-height:12px;">启动端口：</div></div>
<svg class="a" style="left:890px;top:803px;" width="26" height="6" viewBox="0 0 26 6"><ellipse cx="13" cy="10" rx="12" ry="9" fill="#6cc04a"/><ellipse cx="22" cy="10" rx="6" ry="6" fill="#f0a030"/></svg>
<div class="a" style="left:920px;top:803px;height:6px;overflow:hidden"><div class="t" style="position:relative;top:0px;font-size:12px;line-height:12px;">VX/QQ：37508891</div></div>
<svg class="a" style="left:1101px;top:803px;" width="32" height="6" viewBox="0 0 32 6"><text x="0" y="14" font-family="Liberation Sans" font-size="15" font-weight="bold" fill="#f08030">A</text><text x="10" y="14" font-family="Liberation Sans" font-size="15" font-weight="bold" fill="#3a8ee6">B</text><text x="20" y="14" font-family="Liberation Sans" font-size="15" font-weight="bold" fill="#d22">C</text></svg>
<div class="a" style="left:1135px;top:803px;height:6px;overflow:hidden"><div class="t" style="position:relative;top:0px;font-size:12px;line-height:12px;">网站地址：Www.Baigf.Cn</div></div>
<svg class="a" style="left:1318px;top:803px;" width="28" height="6" viewBox="0 0 28 6"><rect x="0" y="0" width="28" height="10" fill="#f8c838"/><path d="M0 0l14 8 14-8" stroke="#e0a020" fill="none"/></svg>
<div class="a" style="left:1352px;top:803px;height:6px;overflow:hidden"><div class="t" style="position:relative;top:0px;font-size:12px;line-height:12px;">当前版本：</div></div>
<svg class="a" style="left:1626px;top:111px;" width="54" height="54" viewBox="0 0 54 54"><defs><radialGradient id="exg"><stop offset="0.66" stop-color="#fff"/><stop offset="0.72" stop-color="#5ab0f0"/><stop offset="0.79" stop-color="#22323e"/><stop offset="1" stop-color="#22323e" stop-opacity="0.6"/></radialGradient><linearGradient id="exp" x1="0" y1="0" x2="0" y2="1"><stop offset="0" stop-color="#f06080"/><stop offset="1" stop-color="#f090e0"/></linearGradient></defs><circle cx="27" cy="27" r="26" fill="url(#exg)"/><path d="M12 19.5h11v3.6h-7v3h6v3h-6v3.2h7v3.6h-11z" fill="url(#exp)"/><path d="M26 19.5h5l4 7.4-4 8h-5l4-8z" fill="url(#exp)"/><path d="M42 19.5h-5l-4 7.4 4 8h5l-4-8z" fill="url(#exp)"/><path d="M31 19.5h6l-3 3z" fill="url(#exp)"/><path d="M31 35h6l-3-3z" fill="url(#exp)"/></svg>
<svg class="a" style="left:1765px;top:104px;" width="13" height="8" viewBox="0 0 13 8"><path d="M1.5 7l5-5 5 5" fill="none" stroke="#606060" stroke-width="2"/></svg>
<div class="a" style="left:1764px;top:117px;width:16px;height:17px;background:#cdcdcd"></div>
<svg class="a" style="left:1765px;top:796px;" width="13" height="8" viewBox="0 0 13 8"><path d="M1.5 1l5 5 5-5" fill="none" stroke="#606060" stroke-width="2"/></svg>
<div class="a" style="left:224px;top:810px;width:1558px;height:1px;background:#fff"></div>
<div class="a" style="left:224px;top:811px;width:1558px;height:1px;background:#808080"></div>
<div class="a" style="left:224px;top:812px;width:1558px;height:1px;background:#a0a0a0"></div>
<svg class="a" style="left:224px;top:812px" width="400" height="20" viewBox="0 0 400 20"><path d="M0.5 0.5l6 18.5h33l5-19" fill="#f0f0f0" stroke="#404040"/><path d="M40.5 0.5l6 18.5h139l5-19" fill="#f0f0f0" stroke="#404040"/><path d="M185.5 0.5l6 18.5h85l5-19" fill="#f0f0f0" stroke="#404040"/><path d="M276.5 0.5l6 18.5h101l5-19" fill="#f0f0f0" stroke="#404040"/></svg>
<div class="a t" style="left:236px;top:814px;font-size:13px">调试</div>
<div class="a t" style="left:280px;top:814px;font-size:12px">窗口程序集_窗口_Main</div>
<div class="a t" style="left:422px;top:814px;font-size:13px;color:#808000">[常量数据表]</div>
<div class="a t" style="left:510px;top:813px;font-size:14px;color:#000080;font-weight:bold">窗口_综合管理</div>
<div class="a" style="left:0px;top:831px;width:1913px;height:1px;background:#a0a0a0"></div>
<div class="a" style="left:0px;top:832px;width:1913px;height:1px;background:#fff"></div>
<div class="a" style="left:1781px;top:99px;width:1px;height:733px;background:#a0a0a0"></div>
<div class="a" style="left:1782px;top:99px;width:1px;height:733px;background:#fff"></div>
<div class="a" style="left:1785px;top:101px;width:1px;height:729px;background:#a0a0a0"></div>
<div class="a" style="left:1786px;top:101px;width:1px;height:729px;background:#fff"></div>
<div class="a" style="left:1787px;top:107px;width:77px;height:1px;background:#a0a0a0"></div>
<div class="a" style="left:1787px;top:108px;width:77px;height:1px;background:#fff"></div>
<div class="a" style="left:1867px;top:103px;width:12px;height:12px;background:#f0f0f0;border-top:1px solid #fff;border-left:1px solid #fff;border-right:1px solid #a0a0a0;border-bottom:1px solid #a0a0a0;box-shadow:1px 1px 0 #696969;box-sizing:border-box;"></div>
<div class="a" style="left:1880px;top:103px;width:12px;height:12px;background:#f0f0f0;border-top:1px solid #fff;border-left:1px solid #fff;border-right:1px solid #a0a0a0;border-bottom:1px solid #a0a0a0;box-shadow:1px 1px 0 #696969;box-sizing:border-box;"></div>
<div class="a" style="left:1893px;top:103px;width:12px;height:12px;background:#f0f0f0;border-top:1px solid #fff;border-left:1px solid #fff;border-right:1px solid #a0a0a0;border-bottom:1px solid #a0a0a0;box-shadow:1px 1px 0 #696969;box-sizing:border-box;"></div>
<svg class="a" style="left:1869px;top:106px;" width="8" height="6" viewBox="0 0 8 6" shape-rendering="crispEdges"><path d="M0 0.5h6M0 2.5h4M0 4.5h7" stroke="#000"/></svg>
<svg class="a" style="left:1883px;top:106px;" width="7" height="6" viewBox="0 0 7 6" shape-rendering="crispEdges"><rect x="0.5" y="0.5" width="6" height="5" fill="none" stroke="#000"/><rect width="7" height="2" fill="#000"/></svg>
<svg class="a" style="left:1896px;top:106px;" width="7" height="6" viewBox="0 0 7 6"><path d="M0.5 0.5l6 5M6.5 0.5l-6 5" stroke="#000" stroke-width="1.6"/></svg>
<div class="a" style="left:1791px;top:120px;width:116px;height:19px;background:#f0f0f0;border-top:1px solid #fff;border-left:1px solid #fff;border-right:1px solid #a0a0a0;border-bottom:1px solid #a0a0a0;box-shadow:1px 1px 0 #696969;box-sizing:border-box;text-align:center;font-size:12px;line-height:16px;white-space:nowrap;font-size:13px">基本组件</div>
<div class="a" style="left:1791px;top:766px;width:116px;height:19px;background:#f0f0f0;border-top:1px solid #fff;border-left:1px solid #fff;border-right:1px solid #a0a0a0;border-bottom:1px solid #a0a0a0;box-shadow:1px 1px 0 #696969;box-sizing:border-box;text-align:center;font-size:12px;line-height:16px;white-space:nowrap;font-size:13px">扩展组件1</div>
<div class="a" style="left:1791px;top:787px;width:116px;height:19px;background:#f0f0f0;border-top:1px solid #fff;border-left:1px solid #fff;border-right:1px solid #a0a0a0;border-bottom:1px solid #a0a0a0;box-shadow:1px 1px 0 #696969;box-sizing:border-box;text-align:center;font-size:12px;line-height:16px;white-space:nowrap;font-size:13px">扩展组件2</div>
<div class="a" style="left:1791px;top:808px;width:116px;height:20px;background:#f0f0f0;border-top:1px solid #fff;border-left:1px solid #fff;border-right:1px solid #a0a0a0;border-bottom:1px solid #a0a0a0;box-shadow:1px 1px 0 #696969;box-sizing:border-box;text-align:center;font-size:12px;line-height:17px;white-space:nowrap;font-size:13px">外部组件</div>
<div class="a" style="left:1791px;top:149px;width:28px;height:28px;border-top:1px solid #000;border-left:1px solid #000;border-right:1px solid #fff;border-bottom:1px solid #fff;box-sizing:border-box;background:#f8f8f8"></div>
<svg class="a" style="left:1795px;top:152px;" width="20" height="20" viewBox="0 0 20 20"><path d="M6 2v14l3.5-3.5 3 6 2-1-3-6h5z" fill="#000"/></svg>
<svg class="a" style="left:1824px;top:152px;" width="20" height="20" viewBox="0 0 20 20"><rect x="1.5" y="4.5" width="17" height="11" fill="#fff" stroke="#000"/><path d="M1 4.5h17M1 4v12" stroke="#000" stroke-width="2"/><text x="4" y="14" font-family="Liberation Sans" font-size="10" fill="#000">A</text><path d="M13.5 6v8" stroke="#000"/></svg>
<svg class="a" style="left:1853px;top:152px;" width="20" height="20" viewBox="0 0 20 20"><rect x="1.5" y="3.5" width="17" height="13" fill="#8ee0f8" stroke="#000"/><path d="M2 16l6-8 4 5 2-3 4 6z" fill="#d8d830" stroke="#000" stroke-width="0.6"/><circle cx="6" cy="7" r="1.8" fill="#ff8"/></svg>
<svg class="a" style="left:1882px;top:152px;" width="20" height="20" viewBox="0 0 20 20"><circle cx="7" cy="8" r="5.5" fill="#8ee88e" stroke="#000" stroke-width="0.8"/><rect x="9" y="6" width="8" height="8" fill="#f8a890" stroke="#000" stroke-width="0.8"/><circle cx="11" cy="14" r="3.5" fill="#ffff80" stroke="#000" stroke-width="0.8"/></svg>
<svg class="a" style="left:1795px;top:181px;" width="20" height="20" viewBox="0 0 20 20"><rect x="2.5" y="6.5" width="10" height="11" fill="#fff" stroke="#000"/><path d="M5 15l3-6 2 6z" fill="#ff0" stroke="#00f" stroke-width="0.8"/><path d="M10 13l7-9" stroke="#000" stroke-width="3"/><path d="M10 13l7-9" stroke="#ff0" stroke-width="1.5"/><circle cx="17" cy="3.5" r="1.5" fill="#f44"/></svg>
<svg class="a" style="left:1824px;top:181px;" width="20" height="20" viewBox="0 0 20 20"><rect x="2.5" y="3.5" width="15" height="14" fill="#f8f8f8" stroke="#999"/><text x="6" y="7" font-family="Liberation Sans" font-size="5.5" font-weight="bold" fill="#000">CN</text></svg>
<svg class="a" style="left:1853px;top:181px;" width="20" height="20" viewBox="0 0 20 20"><text x="1" y="17" font-family="Liberation Serif" font-size="17" font-weight="bold" fill="#000">字</text></svg>
<svg class="a" style="left:1882px;top:181px;" width="20" height="20" viewBox="0 0 20 20"><path d="M2 14.5h16v-9" fill="none" stroke="#000" stroke-width="1.8"/><path d="M2 5.5h15" stroke="#ddd"/></svg>
<svg class="a" style="left:1795px;top:210px;" width="20" height="20" viewBox="0 0 20 20"><rect x="5.5" y="5.5" width="10" height="10" fill="#fff" stroke="#777"/><path d="M6 6h9M6 6v9" stroke="#333"/><path d="M7.5 10l2 2.5 4-5" fill="none" stroke="#00008b" stroke-width="1.8"/></svg>
<svg class="a" style="left:1824px;top:210px;" width="20" height="20" viewBox="0 0 20 20"><circle cx="10" cy="10" r="5" fill="#fff" stroke="#777"/><path d="M6 13a5 5 0 0 1 7-7" fill="none" stroke="#333"/><circle cx="10.5" cy="10" r="1.8" fill="#00008b"/></svg>
<svg class="a" style="left:1853px;top:210px;" width="20" height="20" viewBox="0 0 20 20"><rect x="3.5" y="3.5" width="14" height="14" fill="#fff" stroke="#000"/><path d="M2 3h15" stroke="#000" stroke-width="2"/><path d="M5 7h6M5 9.5h6M5 12h6M5 14.5h6" stroke="#00008b"/><path d="M13.5 4v13" stroke="#000"/><path d="M14 6l1.5-1.5 1.5 1.5M14 10l1.5-1.5 1.5 1.5M14 14l1.5 1.5 1.5-1.5" fill="none" stroke="#000"/></svg>
<svg class="a" style="left:1882px;top:210px;" width="20" height="20" viewBox="0 0 20 20"><rect x="2.5" y="3.5" width="15" height="13" fill="#fff" stroke="#000"/><path d="M4 7h7M4 10h7M4 13h7" stroke="#000"/><path d="M12.5 4v12" stroke="#000"/><path d="M13.5 7l1.5-2 1.5 2M13.5 13l1.5 2 1.5-2" fill="none" stroke="#00008b"/></svg>
<svg class="a" style="left:1795px;top:239px;" width="20" height="20" viewBox="0 0 20 20"><rect x="2.5" y="3.5" width="15" height="13" fill="#fff" stroke="#000"/><rect x="4" y="5.5" width="2" height="2" fill="none" stroke="#000" stroke-width="0.8"/><rect x="4" y="9.5" width="2" height="2" fill="none" stroke="#000" stroke-width="0.8"/><rect x="4" y="13" width="2" height="2" fill="none" stroke="#000" stroke-width="0.8"/><path d="M7 6.5h4M7 10.5h4M7 14h4M12.5 4v12" stroke="#000"/><path d="M13.5 7l1.5-2 1.5 2M13.5 13l1.5 2 1.5-2" fill="none" stroke="#00008b"/></svg>
<svg class="a" style="left:1824px;top:239px;" width="20" height="20" viewBox="0 0 20 20"><rect x="1.5" y="7.5" width="17" height="6" fill="#fff" stroke="#000"/><path d="M4 10.5l2-2v4zM16 10.5l-2-2v4z" fill="#000"/><path d="M8 8v5M11 8v5" stroke="#000"/></svg>
<svg class="a" style="left:1853px;top:239px;" width="20" height="20" viewBox="0 0 20 20"><rect x="6.5" y="1.5" width="7" height="17" fill="#fff" stroke="#000"/><path d="M8 6l2-3 2 3zM8 14l2 3 2-3z" fill="#000"/><path d="M7 9.5h6" stroke="#000"/></svg>
<svg class="a" style="left:1882px;top:239px;" width="20" height="20" viewBox="0 0 20 20"><rect x="1.5" y="7.5" width="17" height="5" fill="#fff" stroke="#aaa"/><path d="M4 8.5v3M6.5 8.5v3M9 8.5v3M11.5 8.5v3" stroke="#00008b" stroke-width="1.8"/></svg>
<svg class="a" style="left:1795px;top:268px;" width="20" height="20" viewBox="0 0 20 20"><path d="M3 10h14M3 10v5" stroke="#000" stroke-width="1.5"/><path d="M3 15h14" stroke="#000" stroke-dasharray="1 1.5"/></svg>
<svg class="a" style="left:1824px;top:268px;" width="20" height="20" viewBox="0 0 20 20"><path d="M2.5 16.5h15v-10h-15zM4 6v-2h4v2" fill="#fff" stroke="#000"/><path d="M3 16.5h15v-10" fill="none" stroke="#000" stroke-width="1.6"/></svg>
<svg class="a" style="left:1853px;top:268px;" width="20" height="20" viewBox="0 0 20 20"><rect x="4.5" y="2.5" width="11" height="15" fill="#f0f0f0" stroke="#6080a0"/><path d="M6.5 2.5v15M13.5 2.5v15" stroke="#6080a0"/><text x="8" y="14" font-family="Liberation Sans" font-size="7" fill="#3060a0">1</text></svg>
<svg class="a" style="left:1882px;top:268px;" width="20" height="20" viewBox="0 0 20 20"><rect x="2.5" y="3.5" width="15" height="13" fill="#fff" stroke="#000"/><path d="M2.5 6h15" stroke="#000"/><ellipse cx="10" cy="12" rx="5" ry="3" fill="none" stroke="#000"/><path d="M8 14l4-4" stroke="#000"/></svg>
<svg class="a" style="left:1795px;top:297px;" width="20" height="20" viewBox="0 0 20 20"><rect x="2.5" y="3.5" width="15" height="13" fill="#fff" stroke="#888"/><path d="M3 5.5h14" stroke="#000080"/><path d="M5 8h2M9 8h2M13 8h2M5 11h2M9 11h2M13 11h2M5 14h2M9 14h2" stroke="#c00"/></svg>
<svg class="a" style="left:1824px;top:297px;" width="20" height="20" viewBox="0 0 20 20"><rect x="2.5" y="6.5" width="15" height="8" rx="1.5" fill="#f8f8f8" stroke="#000"/><path d="M5 9h4" stroke="#0aa"/><path d="M3 13.5h14" stroke="#000"/></svg>
<svg class="a" style="left:1853px;top:297px;" width="20" height="20" viewBox="0 0 20 20"><path d="M2.5 6.5h5l1 1h9v9h-15z" fill="#f8e070" stroke="#000"/><text x="5" y="15" font-family="Liberation Sans" font-size="6" font-weight="bold" fill="#a06000">DIR</text></svg>
<svg class="a" style="left:1882px;top:297px;" width="20" height="20" viewBox="0 0 20 20"><path d="M4.5 2.5h8l3 3v12h-11z" fill="#fff" stroke="#000"/><path d="M6 7h6M6 9.5h7M6 12h7M6 14.5h5" stroke="#00008b"/></svg>
<svg class="a" style="left:1795px;top:326px;" width="20" height="20" viewBox="0 0 20 20"><rect x="2.5" y="5.5" width="15" height="12" fill="#fff" stroke="#000"/><rect x="2" y="2" width="8" height="3" fill="#00008b"/><path d="M5 8h2M9 8h2M13 8h2M5 11h2M9 11h2M13 11h2M5 14h2M9 14h2M13 14h2" stroke="#e03" stroke-width="1.5"/><path d="M9 8h2M5 14h2" stroke="#0a0" stroke-width="1.5"/><path d="M13 11h2" stroke="#ee0" stroke-width="1.5"/></svg>
<svg class="a" style="left:1824px;top:326px;" width="20" height="20" viewBox="0 0 20 20"><circle cx="8" cy="7" r="5" fill="#2a8a2a" stroke="#000" stroke-width="0.6"/><path d="M5 5q3 3 6 1" stroke="#00f" fill="none"/><rect x="9.5" y="9.5" width="8" height="6" fill="#ccc" stroke="#000"/><path d="M3 17v-4l-2 2M3 13l2 2" stroke="#00008b" fill="none"/></svg>
<svg class="a" style="left:1853px;top:326px;" width="20" height="20" viewBox="0 0 20 20"><path d="M4 10l4-4v8z" fill="#fff" stroke="#aaa"/><rect x="9.5" y="3.5" width="6" height="13" fill="#fff" stroke="#000"/><path d="M11 8l1.5-2 1.5 2zM11 12l1.5 2 1.5-2z" fill="#00008b"/></svg>
<svg class="a" style="left:1882px;top:326px;" width="20" height="20" viewBox="0 0 20 20"><rect x="2.5" y="3.5" width="15" height="13" fill="#fff" stroke="#000"/><rect x="3" y="4" width="14" height="2" fill="#00008b"/><rect x="5" y="9" width="3" height="4" fill="none" stroke="#00008b"/><rect x="9" y="9" width="3" height="4" fill="none" stroke="#00008b"/></svg>
<svg class="a" style="left:1795px;top:355px;" width="20" height="20" viewBox="0 0 20 20"><circle cx="10" cy="11" r="7" fill="#fff" stroke="#000" stroke-width="1.2"/><path d="M10 2v2M8 2h4" stroke="#000"/><path d="M10 11l-4-2" stroke="#000"/><circle cx="10" cy="11" r="5.5" fill="none" stroke="#000" stroke-dasharray="0.8 1.6"/></svg>
<svg class="a" style="left:1824px;top:355px;" width="20" height="20" viewBox="0 0 20 20"><path d="M2.5 11.5h15v5h-15z" fill="#eee" stroke="#000"/><path d="M5 11.5v-7h9l2 2v5" fill="#fff" stroke="#000"/><circle cx="10" cy="14" r="1" fill="#e33"/></svg>
<svg class="a" style="left:1853px;top:355px;" width="20" height="20" viewBox="0 0 20 20"><rect x="1.5" y="2.5" width="7" height="5" fill="#ddd" stroke="#000"/><rect x="11.5" y="11.5" width="7" height="5" fill="#ddd" stroke="#000"/><path d="M15 7v-4h-3M12 3l2-1.5M4 12v4h4M8 16l-2 1.5" stroke="#00f" fill="none"/></svg>
<svg class="a" style="left:1882px;top:355px;" width="20" height="20" viewBox="0 0 20 20"><rect x="1.5" y="2.5" width="7" height="5" fill="#00f" stroke="#000"/><rect x="11.5" y="11.5" width="7" height="5" fill="#ddd" stroke="#000"/><path d="M4 10v4h5M9 14l-2-1.5" stroke="#00f" fill="none"/></svg>
<svg class="a" style="left:1795px;top:384px;" width="20" height="20" viewBox="0 0 20 20"><rect x="1.5" y="1.5" width="7" height="5" fill="#ddd" stroke="#000"/><rect x="11.5" y="11.5" width="7" height="5" fill="#00f" stroke="#000"/><path d="M4 9v4h5M9 13l-2-1.5" stroke="#00f" fill="none"/></svg>
<svg class="a" style="left:1824px;top:384px;" width="20" height="20" viewBox="0 0 20 20"><path d="M3 3h6l-1 4h-4z" fill="#ddd" stroke="#000" stroke-width="0.7"/><path d="M6 7q0 6 8 8" fill="none" stroke="#888" stroke-width="1.5"/><path d="M15 9l2-3" stroke="#00f"/></svg>
<svg class="a" style="left:1853px;top:384px;" width="20" height="20" viewBox="0 0 20 20"><rect x="2.5" y="3.5" width="15" height="13" fill="#fff" stroke="#000"/><path d="M2.5 7h15M2.5 10h15M2.5 13h15M6 3.5v13M10 3.5v13M14 3.5v13" stroke="#aaa"/><rect x="7" y="7" width="6" height="4" fill="none" stroke="#00f"/></svg>
<svg class="a" style="left:1882px;top:384px;" width="20" height="20" viewBox="0 0 20 20"><rect x="2.5" y="2.5" width="6" height="6" fill="#fff" stroke="#000"/><rect x="11.5" y="2.5" width="6" height="6" fill="#fff" stroke="#000"/><path d="M4 5.5l3-2v4zM16 5.5l-3-2v4z" fill="#00008b"/><rect x="5.5" y="10.5" width="12" height="3" fill="#fff" stroke="#00008b"/><rect x="5.5" y="14.5" width="12" height="3" fill="#fff" stroke="#00008b"/><path d="M3 9v7h2" stroke="#00008b" fill="none"/></svg>
<svg class="a" style="left:1795px;top:413px;" width="20" height="20" viewBox="0 0 20 20"><rect x="5.5" y="1.5" width="12" height="3" fill="#fff" stroke="#000"/><rect x="5.5" y="5.5" width="12" height="3" fill="#fff" stroke="#000"/><path d="M3 1v7h2M4 16v-5l-2 2M4 11l2 2" stroke="#000" fill="none"/><path d="M9.5 11.5h6l2 2v4h-8z" fill="#fff" stroke="#000"/></svg>
<svg class="a" style="left:1824px;top:413px;" width="20" height="20" viewBox="0 0 20 20"><rect x="5.5" y="1.5" width="12" height="3" fill="#fff" stroke="#000"/><rect x="5.5" y="5.5" width="12" height="3" fill="#fff" stroke="#000"/><path d="M3 1v7h2M4 16v-5l-2 2M4 11l2 2" stroke="#000" fill="none"/><ellipse cx="13" cy="12" rx="3.5" ry="1.5" fill="#a09020" stroke="#000"/><path d="M9.5 12v5q3.5 2 7 0v-5" fill="#a09020" stroke="#000"/></svg>
<svg class="a" style="left:1853px;top:413px;" width="20" height="20" viewBox="0 0 20 20"><rect x="2.5" y="4.5" width="15" height="11" fill="#dce8dc" stroke="#444"/><path d="M3 14l4-6 3 3 4-5 3 4" fill="none" stroke="#444"/><circle cx="6" cy="7" r="1" fill="#ff0"/></svg>
<svg class="a" style="left:1882px;top:413px;" width="20" height="20" viewBox="0 0 20 20"><ellipse cx="5.5" cy="5" rx="3.5" ry="1.5" fill="#666" stroke="#000" stroke-width="0.7"/><path d="M2 5v5q3.5 2 7 0v-5" fill="#888" stroke="#000" stroke-width="0.7"/><ellipse cx="14.5" cy="5" rx="3.5" ry="1.5" fill="#666" stroke="#000" stroke-width="0.7"/><path d="M11 5v5q3.5 2 7 0v-5" fill="#888" stroke="#000" stroke-width="0.7"/><text x="0" y="19" font-family="Liberation Serif" font-size="7" fill="#000">ODBC</text></svg>
<svg class="a" style="left:1795px;top:442px;" width="20" height="20" viewBox="0 0 20 20"><rect x="5.5" y="1.5" width="12" height="3" fill="#fff" stroke="#000"/><path d="M3 1v3h2M4 11v-4l-2 2M4 7l2 2" stroke="#000" fill="none"/><ellipse cx="13" cy="7" rx="3.5" ry="1.5" fill="#a09020" stroke="#000"/><path d="M9.5 7v5q3.5 2 7 0v-5" fill="#a09020" stroke="#000"/><text x="0" y="19" font-family="Liberation Serif" font-size="7" fill="#000">ODBC</text></svg>
<div class="a" style="left:0px;top:836px;width:1913px;height:1px;background:#a0a0a0"></div>
<div class="a" style="left:0px;top:837px;width:1913px;height:1px;background:#fff"></div>
<div class="a" style="left:0px;top:841px;width:8px;height:12px;background:#f0f0f0;border-top:1px solid #fff;border-left:1px solid #fff;border-right:1px solid #a0a0a0;border-bottom:1px solid #a0a0a0;box-shadow:1px 1px 0 #696969;box-sizing:border-box;"></div>
<div class="a" style="left:0px;top:854px;width:8px;height:12px;background:#f0f0f0;border-top:1px solid #fff;border-left:1px solid #fff;border-right:1px solid #a0a0a0;border-bottom:1px solid #a0a0a0;box-shadow:1px 1px 0 #696969;box-sizing:border-box;"></div>
<svg class="a" style="left:0px;top:843px;" width="7" height="7" viewBox="0 0 7 7"><path d="M0 0.5l6 6M6 0.5l-6 6" stroke="#000" stroke-width="1.8"/></svg>
<div class="a" style="left:0px;top:858px;width:6px;height:5px;border:1.5px solid #000;border-top-width:2px;box-sizing:border-box"></div>
<div class="a" style="left:2px;top:869px;width:1px;height:142px;background:#a0a0a0"></div>
<div class="a" style="left:12px;top:862px;width:1897px;height:150px;border-top:1px solid #fff;border-left:1px solid #fff;border-right:2px solid #696969;border-bottom:2px solid #696969;box-sizing:border-box"></div>
<div class="a" style="left:15px;top:866px;width:1892px;height:142px;border-top:2px solid #808080;border-left:2px solid #808080;border-right:3px solid #fff;border-bottom:3px solid #fff;box-sizing:border-box;background:#1e1e1e"></div>
<div class="a" style="left:14px;top:843px;width:56px;height:19px;background:#f0f0f0;border-top:1px solid #fff;border-right:2px solid #a0a0a0;box-sizing:border-box;border-left:1px solid #fff"></div>
<div class="a" style="left:70px;top:841px;width:60px;height:22px;background:#f0f0f0;border-top:1px solid #fff;border-left:1px solid #fff;border-right:2px solid #808080;box-sizing:border-box"></div>
<div class="a" style="left:130px;top:843px;width:68px;height:19px;background:#f0f0f0;border-top:1px solid #fff;border-right:2px solid #a0a0a0;box-sizing:border-box"></div>
<div class="a" style="left:198px;top:843px;width:70px;height:19px;background:#f0f0f0;border-top:1px solid #fff;border-right:2px solid #a0a0a0;box-sizing:border-box"></div>
<div class="a" style="left:268px;top:843px;width:70px;height:19px;background:#f0f0f0;border-top:1px solid #fff;border-right:2px solid #a0a0a0;box-sizing:border-box"></div>
<div class="a" style="left:338px;top:843px;width:64px;height:19px;background:#f0f0f0;border-top:1px solid #fff;border-right:2px solid #a0a0a0;box-sizing:border-box"></div>
<div class="a" style="left:402px;top:843px;width:64px;height:19px;background:#f0f0f0;border-top:1px solid #fff;border-right:2px solid #a0a0a0;box-sizing:border-box"></div>
<div class="a" style="left:466px;top:843px;width:83px;height:19px;background:#f0f0f0;border-top:1px solid #fff;border-right:2px solid #a0a0a0;box-sizing:border-box"></div>
<svg class="a" style="left:22px;top:845px;" width="11" height="15" viewBox="0 0 11 15"><path d="M2 5q0-4 4-4t4 4q0 2-3 3.5v2h-2v-3q3-1 3-2.5t-2-2t-2 2z" fill="#ff0" stroke="#000" stroke-width="0.9"/><circle cx="6" cy="13" r="1.5" fill="#ff0" stroke="#000" stroke-width="0.8"/></svg>
<div class="a t" style="left:41px;top:846px;font-size:13px">提示</div>
<svg class="a" style="left:79px;top:843px;" width="13" height="13" viewBox="0 0 13 13" shape-rendering="crispEdges"><rect x="0.5" y="0.5" width="12" height="12" fill="#fff" stroke="#000"/><rect x="3" y="1" width="9" height="2" fill="#00f"/><path d="M2 5h8M2 7h5M2 9h7M2 11h4" stroke="#000"/></svg>
<div class="a t" style="left:99px;top:844px;font-size:13px">输出</div>
<svg class="a" style="left:137px;top:845px;" width="12" height="12" viewBox="0 0 12 12" shape-rendering="crispEdges"><path d="M1.5 0v12M5.5 0v12M9.5 0v12M0 3h11M0 9h11" stroke="#000"/><path d="M0 6h11" stroke="#00f" stroke-dasharray="1 1"/></svg>
<div class="a t" style="left:157px;top:846px;font-size:13px">调用表</div>
<svg class="a" style="left:205px;top:843px;" width="16" height="16" viewBox="0 0 16 16"><circle cx="6.5" cy="6.5" r="5" fill="none" stroke="#000" stroke-width="1.6"/><path d="M10 10l5 5" stroke="#000" stroke-width="2.2"/></svg>
<div class="a t" style="left:227px;top:846px;font-size:13px">监视表</div>
<svg class="a" style="left:275px;top:846px;" width="17" height="11" viewBox="0 0 17 11"><path d="M1 5l4-4 5 5-4 4z" fill="#ff0" stroke="#000"/><path d="M8 5l4-4 4 4-4 4z" fill="#fff" stroke="#000"/></svg>
<div class="a t" style="left:297px;top:846px;font-size:13px">变量表</div>
<svg class="a" style="left:345px;top:845px;" width="16" height="14" viewBox="0 0 16 14" shape-rendering="crispEdges"><rect x="0.5" y="0.5" width="10" height="11" fill="#fff" stroke="#000"/><path d="M2 3h2M2 5h2M2 7h2M2 9h2" stroke="#000"/><circle cx="8.5" cy="6.5" r="3" fill="#fff" stroke="#000"/><path d="M10.5 9l4 4" stroke="#000" stroke-width="2"/></svg>
<div class="a t" style="left:367px;top:846px;font-size:13px">搜寻1</div>
<svg class="a" style="left:409px;top:845px;" width="16" height="14" viewBox="0 0 16 14" shape-rendering="crispEdges"><rect x="0.5" y="0.5" width="10" height="11" fill="#fff" stroke="#000"/><path d="M2 3h2M2 5h2M2 7h2M2 9h2" stroke="#000"/><circle cx="8.5" cy="6.5" r="3" fill="#fff" stroke="#000"/><path d="M10.5 9l4 4" stroke="#000" stroke-width="2"/></svg>
<div class="a t" style="left:431px;top:846px;font-size:13px">搜寻2</div>
<svg class="a" style="left:477px;top:845px;" width="11" height="13" viewBox="0 0 11 13" shape-rendering="crispEdges"><rect x="0.5" y="0.5" width="10" height="12" fill="#fff" stroke="#000"/><path d="M2 3h6M2 5h7M2 7h6M2 9h7" stroke="#000"/></svg>
<div class="a t" style="left:495px;top:846px;font-size:13px">剪辑历史</div>
<div class="a t" style="left:18px;top:869px;color:#dcdcdc;font-size:12px;line-height:12px"><svg width="12" height="12" viewBox="0 0 12 12" style="vertical-align:top"><path d="M6 1l5 5-5 5-5-5z" fill="#d8d8d8"/></svg><svg width="6" height="12" viewBox="0 0 6 12" style="vertical-align:top"><rect x="2" y="9" width="1.5" height="1.5" fill="#d8d8d8"/></svg>易语言助手提醒您:</div>
<div class="a t" style="left:18px;top:881px;color:#dcdcdc;font-size:12px;line-height:12px"><svg width="12" height="12" viewBox="0 0 12 12" style="vertical-align:top"><path d="M0 1.5h12l-6 10z" fill="#d8d8d8"/></svg><svg width="12" height="12" viewBox="0 0 12 12" style="vertical-align:top"><path d="M0 1.5h12l-6 10z" fill="#d8d8d8"/></svg><svg width="12" height="12" viewBox="0 0 12 12" style="vertical-align:top"><path d="M0 1.5h12l-6 10z" fill="#d8d8d8"/></svg><svg width="12" height="12" viewBox="0 0 12 12" style="vertical-align:top"><path d="M0 1.5h12l-6 10z" fill="#d8d8d8"/></svg><svg width="12" height="12" viewBox="0 0 12 12" style="vertical-align:top"><path d="M0 1.5h12l-6 10z" fill="#d8d8d8"/></svg>助手正在加载中，请看到加载插件完毕后在执行其他操作<svg width="12" height="12" viewBox="0 0 12 12" style="vertical-align:top"><path d="M0 1.5h12l-6 10z" fill="#d8d8d8"/></svg><svg width="12" height="12" viewBox="0 0 12 12" style="vertical-align:top"><path d="M0 1.5h12l-6 10z" fill="#d8d8d8"/></svg><svg width="12" height="12" viewBox="0 0 12 12" style="vertical-align:top"><path d="M0 1.5h12l-6 10z" fill="#d8d8d8"/></svg><svg width="12" height="12" viewBox="0 0 12 12" style="vertical-align:top"><path d="M0 1.5h12l-6 10z" fill="#d8d8d8"/></svg><svg width="12" height="12" viewBox="0 0 12 12" style="vertical-align:top"><path d="M0 1.5h12l-6 10z" fill="#d8d8d8"/></svg></div>
<div class="a t" style="left:18px;top:893px;color:#dcdcdc;font-size:12px;line-height:12px"><svg width="12" height="12" viewBox="0 0 12 12" style="vertical-align:top"><path d="M6 1l5 5-5 5-5-5z" fill="#d8d8d8"/></svg><svg width="6" height="12" viewBox="0 0 6 12" style="vertical-align:top"><rect x="2" y="9" width="1.5" height="1.5" fill="#d8d8d8"/></svg>易语言助手提醒您：正在初始化插件系统...</div>
<div class="a t" style="left:18px;top:905px;color:#dcdcdc;font-size:12px;line-height:12px"><svg width="12" height="12" viewBox="0 0 12 12" style="vertical-align:top"><path d="M6 1l5 5-5 5-5-5z" fill="#d8d8d8"/></svg><svg width="6" height="12" viewBox="0 0 6 12" style="vertical-align:top"><rect x="2" y="9" width="1.5" height="1.5" fill="#d8d8d8"/></svg>易语言助手提醒您：正在加载插件...</div>
<div class="a t" style="left:18px;top:917px;color:#dcdcdc;font-size:12px;line-height:12px"><svg width="12" height="12" viewBox="0 0 12 12" style="vertical-align:top"><path d="M6 1l5 5-5 5-5-5z" fill="#d8d8d8"/></svg><svg width="6" height="12" viewBox="0 0 6 12" style="vertical-align:top"><rect x="2" y="9" width="1.5" height="1.5" fill="#d8d8d8"/></svg>易语言助手提醒您：加载插件完成，共启用【5】个插件!</div>
<div class="a t" style="left:18px;top:929px;color:#dcdcdc;font-size:12px;line-height:12px"><svg width="12" height="12" viewBox="0 0 12 12" style="vertical-align:top"><path d="M6 1l5 5-5 5-5-5z" fill="#d8d8d8"/></svg><svg width="6" height="12" viewBox="0 0 6 12" style="vertical-align:top"><rect x="2" y="9" width="1.5" height="1.5" fill="#d8d8d8"/></svg>易语言助手提醒您：<svg width="12" height="12" viewBox="0 0 12 12" style="vertical-align:top"><path d="M0 11h12l-6-10z" fill="#d8d8d8"/></svg><svg width="12" height="12" viewBox="0 0 12 12" style="vertical-align:top"><path d="M0 11h12l-6-10z" fill="#d8d8d8"/></svg><svg width="12" height="12" viewBox="0 0 12 12" style="vertical-align:top"><path d="M0 11h12l-6-10z" fill="#d8d8d8"/></svg><svg width="12" height="12" viewBox="0 0 12 12" style="vertical-align:top"><path d="M0 11h12l-6-10z" fill="#d8d8d8"/></svg><svg width="12" height="12" viewBox="0 0 12 12" style="vertical-align:top"><path d="M0 11h12l-6-10z" fill="#d8d8d8"/></svg><svg width="12" height="12" viewBox="0 0 12 12" style="vertical-align:top"><path d="M0 11h12l-6-10z" fill="#d8d8d8"/></svg><svg width="12" height="12" viewBox="0 0 12 12" style="vertical-align:top"><path d="M0 11h12l-6-10z" fill="#d8d8d8"/></svg><svg width="12" height="12" viewBox="0 0 12 12" style="vertical-align:top"><path d="M0 11h12l-6-10z" fill="#d8d8d8"/></svg><svg width="12" height="12" viewBox="0 0 12 12" style="vertical-align:top"><path d="M0 11h12l-6-10z" fill="#d8d8d8"/></svg><svg width="12" height="12" viewBox="0 0 12 12" style="vertical-align:top"><path d="M0 11h12l-6-10z" fill="#d8d8d8"/></svg><svg width="12" height="12" viewBox="0 0 12 12" style="vertical-align:top"><path d="M0 11h12l-6-10z" fill="#d8d8d8"/></svg>【加载完成】<svg width="12" height="12" viewBox="0 0 12 12" style="vertical-align:top"><path d="M0 11h12l-6-10z" fill="#d8d8d8"/></svg><svg width="12" height="12" viewBox="0 0 12 12" style="vertical-align:top"><path d="M0 11h12l-6-10z" fill="#d8d8d8"/></svg><svg width="12" height="12" viewBox="0 0 12 12" style="vertical-align:top"><path d="M0 11h12l-6-10z" fill="#d8d8d8"/></svg><svg width="12" height="12" viewBox="0 0 12 12" style="vertical-align:top"><path d="M0 11h12l-6-10z" fill="#d8d8d8"/></svg><svg width="12" height="12" viewBox="0 0 12 12" style="vertical-align:top"><path d="M0 11h12l-6-10z" fill="#d8d8d8"/></svg><svg width="12" height="12" viewBox="0 0 12 12" style="vertical-align:top"><path d="M0 11h12l-6-10z" fill="#d8d8d8"/></svg><svg width="12" height="12" viewBox="0 0 12 12" style="vertical-align:top"><path d="M0 11h12l-6-10z" fill="#d8d8d8"/></svg><svg width="12" height="12" viewBox="0 0 12 12" style="vertical-align:top"><path d="M0 11h12l-6-10z" fill="#d8d8d8"/></svg><svg width="12" height="12" viewBox="0 0 12 12" style="vertical-align:top"><path d="M0 11h12l-6-10z" fill="#d8d8d8"/></svg><svg width="12" height="12" viewBox="0 0 12 12" style="vertical-align:top"><path d="M0 11h12l-6-10z" fill="#d8d8d8"/></svg><svg width="12" height="12" viewBox="0 0 12 12" style="vertical-align:top"><path d="M0 11h12l-6-10z" fill="#d8d8d8"/></svg></div>
<div class="a t" style="left:18px;top:941px;color:#dcdcdc;font-size:12px;line-height:12px"><svg width="12" height="12" viewBox="0 0 12 12" style="vertical-align:top"><path d="M6 0.5l1.6 3.9 4.2 0.3-3.2 2.7 1 4.1-3.6-2.2-3.6 2.2 1-4.1-3.2-2.7 4.2-0.3z" fill="#d8d8d8"/></svg><svg width="12" height="12" viewBox="0 0 12 12" style="vertical-align:top"><path d="M6 0.5l1.6 3.9 4.2 0.3-3.2 2.7 1 4.1-3.6-2.2-3.6 2.2 1-4.1-3.2-2.7 4.2-0.3z" fill="#d8d8d8"/></svg><svg width="12" height="12" viewBox="0 0 12 12" style="vertical-align:top"><path d="M6 0.5l1.6 3.9 4.2 0.3-3.2 2.7 1 4.1-3.6-2.2-3.6 2.2 1-4.1-3.2-2.7 4.2-0.3z" fill="#d8d8d8"/></svg><svg width="12" height="12" viewBox="0 0 12 12" style="vertical-align:top"><path d="M6 0.5l1.6 3.9 4.2 0.3-3.2 2.7 1 4.1-3.6-2.2-3.6 2.2 1-4.1-3.2-2.7 4.2-0.3z" fill="#d8d8d8"/></svg><svg width="12" height="12" viewBox="0 0 12 12" style="vertical-align:top"><path d="M6 0.5l1.6 3.9 4.2 0.3-3.2 2.7 1 4.1-3.6-2.2-3.6 2.2 1-4.1-3.2-2.7 4.2-0.3z" fill="#d8d8d8"/></svg><svg width="12" height="12" viewBox="0 0 12 12" style="vertical-align:top"><path d="M6 0.5l1.6 3.9 4.2 0.3-3.2 2.7 1 4.1-3.6-2.2-3.6 2.2 1-4.1-3.2-2.7 4.2-0.3z" fill="#d8d8d8"/></svg>当前模块守护插件已不推荐使用<svg width="12" height="12" viewBox="0 0 12 12" style="vertical-align:top"><path d="M6 0.5l1.6 3.9 4.2 0.3-3.2 2.7 1 4.1-3.6-2.2-3.6 2.2 1-4.1-3.2-2.7 4.2-0.3z" fill="#d8d8d8"/></svg><svg width="12" height="12" viewBox="0 0 12 12" style="vertical-align:top"><path d="M6 0.5l1.6 3.9 4.2 0.3-3.2 2.7 1 4.1-3.6-2.2-3.6 2.2 1-4.1-3.2-2.7 4.2-0.3z" fill="#d8d8d8"/></svg><svg width="12" height="12" viewBox="0 0 12 12" style="vertical-align:top"><path d="M6 0.5l1.6 3.9 4.2 0.3-3.2 2.7 1 4.1-3.6-2.2-3.6 2.2 1-4.1-3.2-2.7 4.2-0.3z" fill="#d8d8d8"/></svg><svg width="12" height="12" viewBox="0 0 12 12" style="vertical-align:top"><path d="M6 0.5l1.6 3.9 4.2 0.3-3.2 2.7 1 4.1-3.6-2.2-3.6 2.2 1-4.1-3.2-2.7 4.2-0.3z" fill="#d8d8d8"/></svg><svg width="12" height="12" viewBox="0 0 12 12" style="vertical-align:top"><path d="M6 0.5l1.6 3.9 4.2 0.3-3.2 2.7 1 4.1-3.6-2.2-3.6 2.2 1-4.1-3.2-2.7 4.2-0.3z" fill="#d8d8d8"/></svg></div>
<div class="a" style="left:1886px;top:868px;width:18px;height:137px;background:#f0f0f0"></div>
<svg class="a" style="left:1888px;top:880px;" width="13" height="8" viewBox="0 0 13 8"><path d="M1.5 7l5-5 5 5" fill="none" stroke="#c0c0c0" stroke-width="2"/></svg>
<svg class="a" style="left:1888px;top:992px;" width="13" height="8" viewBox="0 0 13 8"><path d="M1.5 1l5 5 5-5" fill="none" stroke="#c0c0c0" stroke-width="2"/></svg>
<div class="a" style="left:0px;top:1011px;width:1913px;height:1px;background:#a0a0a0"></div>
<div class="a" style="left:0px;top:1012px;width:1913px;height:1px;background:#fff"></div>
<div class="a" style="left:0px;top:1017px;width:1913px;height:2px;background:#000"></div>
<div class="a" style="left:1660px;top:840px;width:242px;height:35px;background:#fff;border-radius:17px"></div>
<div class="a t" style="left:1667px;top:851px;font-size:13px;line-height:14px;color:#333">养天气黑猫：12种小猫播报天<span style="color:#c8c8c8">气</span></div>
<div class="a" style="left:1856px;top:845px;width:42px;height:25px;background:linear-gradient(90deg,#fde0e6,#f0d8f4);border-radius:12px;text-align:center;font-size:13px;line-height:25px;color:#e0607a;white-space:nowrap">换肤</div>
<svg class="a" style="left:1896px;top:827px;" width="16" height="16" viewBox="0 0 16 16"><circle cx="8" cy="8" r="7.5" fill="#8a8a8a"/><path d="M5 5l6 6M11 5l-6 6" stroke="#eee" stroke-width="1.4"/></svg>
<svg class="a" style="left:1612px;top:833px;" width="56" height="52" viewBox="0 0 56 52"><g fill="#eef6ff" stroke="#7cc4f4" stroke-width="1.2"><circle cx="15" cy="16" r="10"/><circle cx="8" cy="29" r="7"/><circle cx="47" cy="27" r="8"/><circle cx="44" cy="40" r="8"/></g><circle cx="40" cy="12" r="6" fill="#fdeaa8" stroke="#f5c84a" stroke-width="1.2"/><path d="M15 38l2-17 8 5 11-5 6 5-2 16z" fill="#333"/><path d="M25 28l-2 5M32 30l-2 5" stroke="#f5b060" stroke-width="1.6" stroke-linecap="round"/><g fill="#f6fbff" stroke="#7cc4f4" stroke-width="1.2"><ellipse cx="20" cy="42" rx="13" ry="8"/><ellipse cx="40" cy="43" rx="9" ry="6.5"/></g><path d="M9 39l1.5 1.5-1.5 1.5-1.5-1.5z" fill="none" stroke="#f5b060"/></svg>
<div class="a" style="left:1659px;top:889px;width:252px;height:30px;background:#fff;border-radius:7px;box-shadow:0 0 1px #ccc"></div>
<svg class="a" style="left:1667px;top:896px;" width="21" height="17" viewBox="0 0 21 17"><path d="M18 3q-6-3-13 0q-4 2-1 5q3 2 9 2q5 1 2 4q-4 2-13-1" fill="none" stroke="#f86a0a" stroke-width="4.2" stroke-linecap="round"/></svg>
<div class="a" style="left:1695px;top:896px;width:1px;height:17px;background:#d0d0d0"></div>
<div class="a t" style="left:1705px;top:896px;font-size:16px;line-height:17px;font-weight:bold">中</div>
<svg class="a" style="left:1733px;top:896px;" width="14" height="16" viewBox="0 0 14 16"><circle cx="4" cy="4" r="2.6" fill="none" stroke="#000" stroke-width="1.4"/><path d="M10 10q2 1 0 5" stroke="#000" stroke-width="2.4" fill="none"/></svg>
<svg class="a" style="left:1760px;top:895px;" width="16" height="19" viewBox="0 0 16 19"><rect x="4.5" y="1" width="7" height="11" rx="3.5" fill="none" stroke="#000" stroke-width="1.6"/><path d="M2 8q0 6 6 6t6-6M8 14v4" fill="none" stroke="#000" stroke-width="1.6"/></svg>
<svg class="a" style="left:1790px;top:896px;" width="19" height="16" viewBox="0 0 19 16"><rect x="1" y="1" width="17" height="14" rx="2" fill="none" stroke="#000" stroke-width="1.5"/><path d="M4 5h2M8 5h2M12 5h2M4 8h2M8 8h2M12 8h2M5 11h9" stroke="#000" stroke-width="1.4"/></svg>
<svg class="a" style="left:1822px;top:893px;" width="22" height="20" viewBox="0 0 22 20"><defs><linearGradient id="shirt" x1="0" y1="0" x2="1" y2="1"><stop offset="0" stop-color="#e05a8a"/><stop offset="0.5" stop-color="#9a6af0"/><stop offset="1" stop-color="#4ab0f8"/></linearGradient></defs><path d="M2 7l5-3q3 2 6 0l5 3-2 4-2-1v9h-8v-9l-2 1z" fill="url(#shirt)"/><circle cx="18" cy="4" r="3" fill="#f05030"/></svg>
<svg class="a" style="left:1852px;top:896px;" width="17" height="17" viewBox="0 0 17 17"><rect x="1" y="1" width="6" height="6" rx="1.5" fill="none" stroke="#000" stroke-width="1.6"/><rect x="10" y="1" width="6" height="6" rx="1.5" fill="none" stroke="#000" stroke-width="1.6"/><rect x="1" y="10" width="6" height="6" rx="1.5" fill="none" stroke="#000" stroke-width="1.6"/><rect x="10" y="10" width="6" height="6" rx="1.5" fill="none" stroke="#000" stroke-width="1.6"/></svg>
<svg class="a" style="left:1882px;top:893px;" width="24" height="23" viewBox="0 0 24 23"><circle cx="11" cy="12" r="10" fill="#fff" stroke="#f0e0e0"/><path d="M3 11q8-4 15-1l-1 4q-6 2-13 0z" fill="#f07020"/><circle cx="9" cy="12" r="1" fill="#000"/><path d="M20 3l1 2 2 1-2 1-1 2-1-2-2-1 2-1z" fill="#ffd040"/></svg>
<svg class="a" style="left:1730px;top:955px;" width="172" height="42" viewBox="0 0 172 42"><g fill="none" stroke="#e8302a" stroke-width="3.3" stroke-linecap="round" stroke-linejoin="round"><path d="M6.7 18.4q4-7 10-7.2q6 0.5 5.6 4q-2 7-15.6 18.8q9-2 19-1.2"/><path d="M29 11.5q6-0.6 12.3 0.2q-4 10-4.5 24"/><path d="M63.5 10.5q-8-1-12 7q-3 8 1 13.5q5 4 15.5-1"/><path d="M81.4 20.6q-6-2-8 3q-1.5 5 3 6q4-0.5 5-8.5q0 7 4.5 9.5"/><path d="M83.6 10.8q12-1.5 23.4-2.4M95.8 9.8q-0.5 11-1.1 22"/><path d="M102 13l3 3M103.6 19.5q1.2 9 3 16.5q3-3.5 6-6"/><path d="M111 25q6-7 12.5-15q5 6.5 10 11.5"/><path d="M119.5 24.5q4 0 7.5-1.5M120.5 26q-0.5 5-0.3 9.5q5 1.5 10.5 1.5"/><path d="M146 10.5q-0.5 10-1.5 19M140 20.5q5-1.5 10-3M141 36q5-5.5 11-10.5"/><path d="M150 15q6-0.5 13-1M149.5 21q7-1 14.5-1.5q-6 7-11 15q6-2 12-6M164 27.5q1.5 4 2 8"/></g></svg></body></html>
